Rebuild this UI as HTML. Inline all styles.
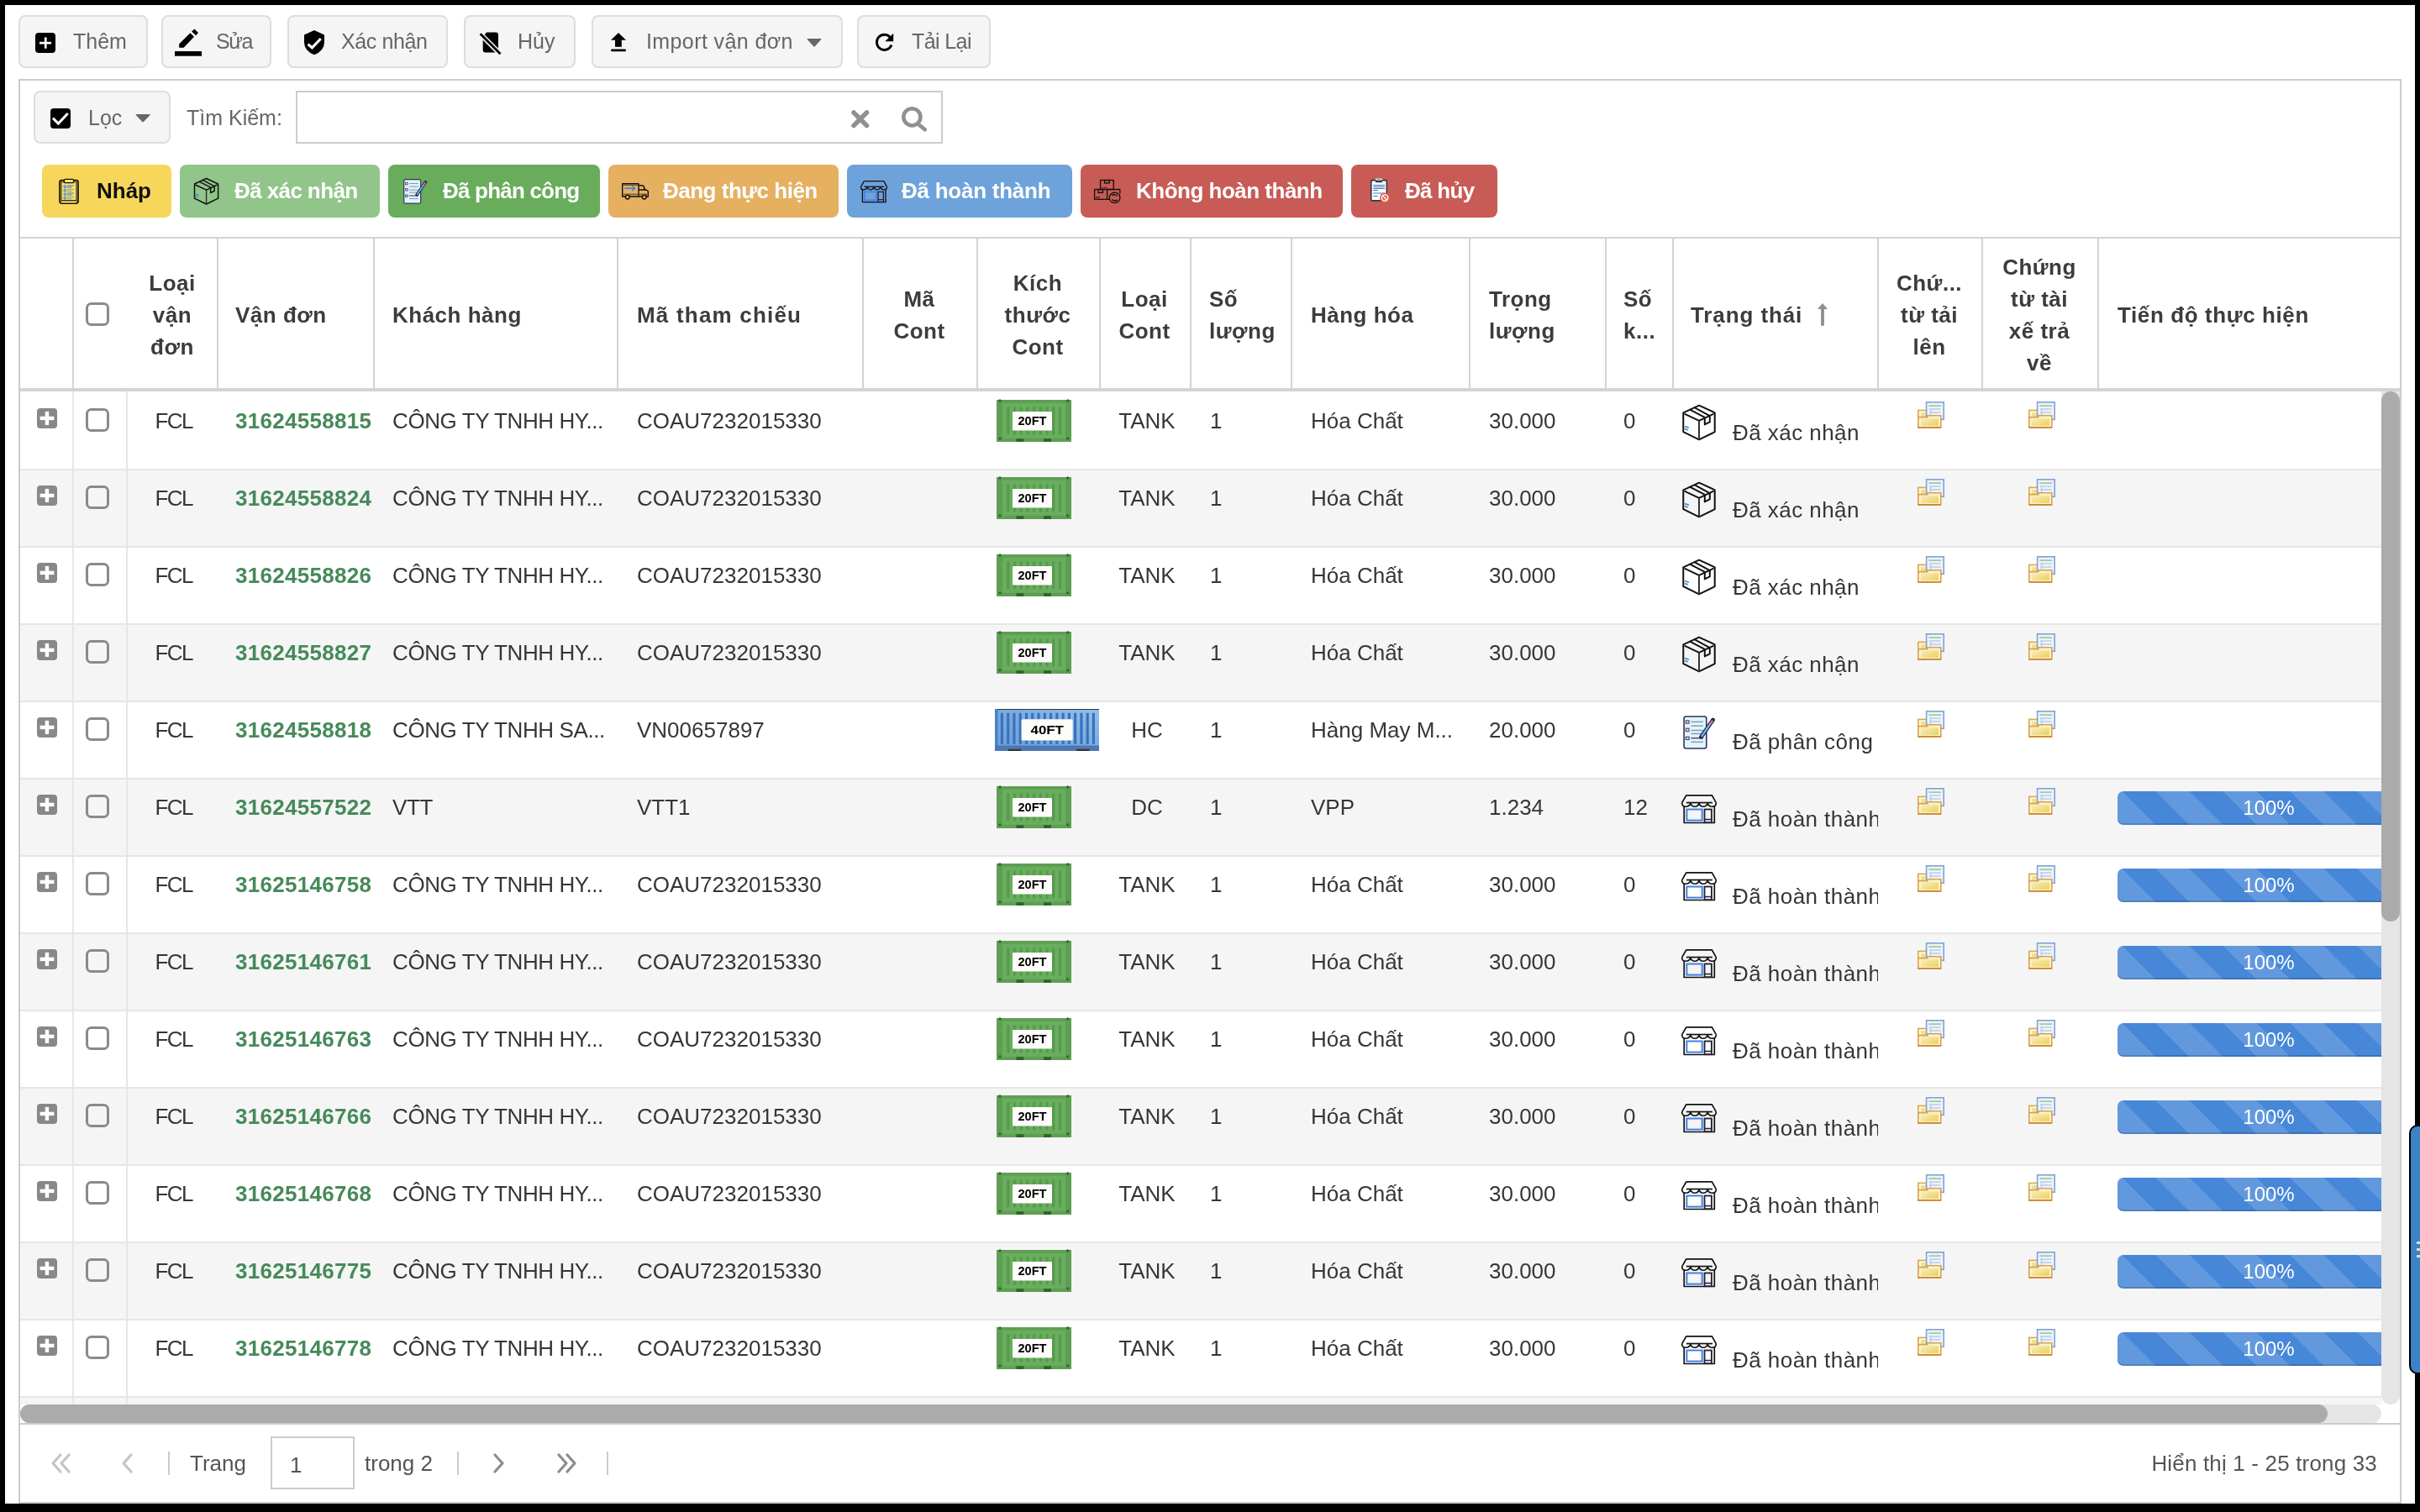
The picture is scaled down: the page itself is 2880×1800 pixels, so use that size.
<!DOCTYPE html><html><head><meta charset="utf-8"><style>
*{box-sizing:border-box;margin:0;padding:0}
html,body{width:2880px;height:1800px;overflow:hidden;background:#000;font-family:"Liberation Sans",sans-serif;color:#333}
#pg{position:absolute;left:6px;top:6px;width:2868px;height:1784px;background:#fff;overflow:hidden;will-change:transform}
.ab{position:absolute}
svg.ab{overflow:visible}
.btn{position:absolute;top:12px;height:63px;border:2px solid #ddd;background:#f5f5f5;border-radius:8px}
.bt{position:absolute;font-size:25px;color:#666;line-height:30px;white-space:nowrap}
.tag{position:absolute;top:190px;height:63px;border-radius:8px}
.tt{position:absolute;font-size:26px;font-weight:bold;color:#fff;line-height:30px;white-space:nowrap;top:16px}
.t{position:absolute;font-size:26px;line-height:30px;white-space:nowrap;color:#363636}
.hd{position:absolute;font-size:26px;font-weight:bold;line-height:38px;color:#3c3c3c;display:flex;align-items:center;top:280px;height:178px}
.vl{position:absolute;width:2px;background:#d4d4d4}
</style></head><body><div id="pg">
<div class="btn" style="left:16px;width:154px"></div>
<div class="bt" style="left:81px;top:28px;letter-spacing:0px">Thêm</div>
<div class="btn" style="left:186px;width:131px"></div>
<div class="bt" style="left:251px;top:28px;letter-spacing:-1.5px">Sửa</div>
<div class="btn" style="left:336px;width:191px"></div>
<div class="bt" style="left:400px;top:28px;letter-spacing:-0.4px">Xác nhận</div>
<div class="btn" style="left:546px;width:133px"></div>
<div class="bt" style="left:610px;top:28px;letter-spacing:0px">Hủy</div>
<div class="btn" style="left:698px;width:299px"></div>
<div class="bt" style="left:763px;top:28px;letter-spacing:0.4px">Import vận đơn</div>
<div class="btn" style="left:1014px;width:159px"></div>
<div class="bt" style="left:1079px;top:28px;letter-spacing:-0.6px">Tải Lại</div>
<svg class="ab" style="left:36px;top:32.5px;" width="24" height="24" viewBox="0 0 24 24"><rect width="24" height="24" rx="4" fill="#000"/><rect x="5" y="10.8" width="14" height="2.7" fill="#fff"/><rect x="10.9" y="5.5" width="2.7" height="13.2" fill="#fff"/></svg>
<svg class="ab" style="left:202px;top:28px;" width="32" height="33" viewBox="0 0 32 33"><rect x="0" y="27" width="32" height="5.7" fill="#000"/><polygon points="5.2,18.3 18.4,5.2 23,9.8 10.6,22.8 5.2,22.8" fill="#000"/><polygon points="20.1,3.4 23.4,0.5 28,5 25.1,8.2" fill="#000"/></svg>
<svg class="ab" style="left:356px;top:29.700000000000003px;" width="24" height="30" viewBox="0 0 24 30"><path d="M12,0 L24,5.4 L24,14 Q24,24.5 12,29.3 Q0,24.5 0,14 L0,5.4 Z" fill="#000"/><polyline points="4.5,16.6 9.4,20.8 19.8,10" fill="none" stroke="#fff" stroke-width="3.2"/></svg>
<svg class="ab" style="left:565px;top:32px;" width="26" height="28" viewBox="0 0 26 28"><path d="M8,0.6 L19,0.6 Q22,0.6 22,3.6 L22,21.6 Q22,24.6 19,24.6 L6.7,24.6 Q3.7,24.6 3.7,21.6 L3.7,5.8 Z" fill="#000"/><line x1="0.6" y1="2.3" x2="24.5" y2="26.3" stroke="#f5f5f5" stroke-width="6"/><line x1="0.6" y1="2.3" x2="24.5" y2="26.3" stroke="#000" stroke-width="2.8"/></svg>
<svg class="ab" style="left:721px;top:32.9px;" width="18" height="23" viewBox="0 0 18 23"><polygon points="9,0 18,8.8 0,8.8" fill="#000"/><rect x="5" y="8.5" width="7.8" height="8.3" fill="#000"/><rect x="0" y="19.6" width="18" height="2.6" rx="1.2" fill="#000"/></svg>
<svg class="ab" style="left:954px;top:40px;" width="18" height="10" viewBox="0 0 18 10"><path d="M1,0 L17,0 Q18,0 17.2,1 L9.8,9.2 Q9.0,10 8.2,9.2 L0.8,1 Q0,0 1,0 Z" fill="#666"/></svg>
<svg class="ab" style="left:1035px;top:34px;" width="23" height="23" viewBox="0 0 23 23"><path d="M18.2,4.2 A9.1,9.1 0 1 0 20.0,13.6" fill="none" stroke="#000" stroke-width="2.9"/><polygon points="12.3,9.2 22.2,9.2 22.2,-0.2" fill="#000"/></svg>
<div class="ab" style="left:16px;top:88px;width:2836px;height:1696px;border:2px solid #ccc"></div>
<div class="btn" style="left:34px;top:102px;width:163px"></div>
<svg class="ab" style="left:54px;top:122.6px;" width="24" height="24" viewBox="0 0 24 24"><rect width="24" height="24" rx="4" fill="#000"/><polyline points="3,11.6 9.4,18 20.7,5.9" fill="none" stroke="#fff" stroke-width="3"/></svg>
<svg class="ab" style="left:155px;top:130px;" width="18.3" height="9.7" viewBox="0 0 18.3 9.7"><path d="M1,0 L17.3,0 Q18.3,0 17.5,1 L9.950000000000001,8.899999999999999 Q9.15,9.7 8.35,8.899999999999999 L0.8,1 Q0,0 1,0 Z" fill="#666"/></svg>
<div class="bt" style="left:99px;top:119px">Lọc</div>
<div class="bt" style="left:216px;top:119px">Tìm Kiếm:</div>
<div class="ab" style="left:346px;top:102px;width:770px;height:63px;border:2px solid #ccc;background:#fff"></div>
<svg class="ab" style="left:1007px;top:124.5px;" width="22" height="22" viewBox="0 0 22 22"><line x1="3" y1="3" x2="18.5" y2="18.5" stroke="#909090" stroke-width="5.5" stroke-linecap="round"/><line x1="18.5" y1="3" x2="3" y2="18.5" stroke="#909090" stroke-width="5.5" stroke-linecap="round"/></svg>
<svg class="ab" style="left:1067px;top:121px;" width="31" height="30" viewBox="0 0 31 30"><circle cx="12.4" cy="12.3" r="10.1" fill="none" stroke="#909090" stroke-width="4.5"/><line x1="20" y1="21" x2="27.8" y2="27.3" stroke="#909090" stroke-width="4.6" stroke-linecap="round"/></svg>
<div class="tag" style="left:44px;width:154px;background:#f7d75b"><div class="tt" style="left:65px;color:#111;letter-spacing:0px">Nháp</div></div>
<div class="tag" style="left:208px;width:238px;background:#91c58a"><div class="tt" style="left:65px;color:#fff;letter-spacing:-0.6px">Đã xác nhận</div></div>
<div class="tag" style="left:456px;width:252px;background:#68ac5c"><div class="tt" style="left:65px;color:#fff;letter-spacing:-0.8px">Đã phân công</div></div>
<div class="tag" style="left:718px;width:274px;background:#e6b061"><div class="tt" style="left:65px;color:#fff;letter-spacing:-0.5px">Đang thực hiện</div></div>
<div class="tag" style="left:1002px;width:268px;background:#6ea2da"><div class="tt" style="left:65px;color:#fff;letter-spacing:-0.25px">Đã hoàn thành</div></div>
<div class="tag" style="left:1280px;width:312px;background:#c85b55"><div class="tt" style="left:66px;color:#fff;letter-spacing:-0.5px">Không hoàn thành</div></div>
<div class="tag" style="left:1602px;width:174px;background:#c85b55"><div class="tt" style="left:64px;color:#fff;letter-spacing:-0.7px">Đã hủy</div></div>
<svg class="ab" style="left:64px;top:206.3px;" width="24" height="31.7" viewBox="0 0 24 30.4"><rect x="0.8" y="1.8" width="22.4" height="27.8" rx="2.5" fill="#7a6a2e" stroke="#111" stroke-width="1.3"/><rect x="3.8" y="4.9" width="16.3" height="21.6" fill="#fde168"/><rect x="3.2" y="26.2" width="17.6" height="2.6" fill="#fde168"/><line x1="3.2" y1="26.1" x2="20.8" y2="26.1" stroke="#111" stroke-width="1.2"/><rect x="6.3" y="0.7" width="11.4" height="4.3" rx="1.6" fill="#fde168" stroke="#111" stroke-width="1.3"/><g fill="none" stroke="#3e7fe4" stroke-width="1.1"><circle cx="7.3" cy="9.4" r="1.3"/><circle cx="7.3" cy="13.9" r="1.3"/><circle cx="7.3" cy="18.4" r="1.3"/><circle cx="7.3" cy="22.9" r="1.3"/><line x1="9.8" y1="8.4" x2="17.8" y2="8.4"/><line x1="9.8" y1="10.4" x2="15.5" y2="10.4"/><line x1="9.8" y1="12.9" x2="17.8" y2="12.9" stroke="#90a0a0"/><line x1="9.8" y1="15" x2="15.5" y2="15" stroke="#90a0a0"/><line x1="9.8" y1="17.4" x2="17.8" y2="17.4"/><line x1="9.8" y1="19.4" x2="15.5" y2="19.4"/><line x1="9.8" y1="21.9" x2="17.8" y2="21.9" stroke="#90a0a0"/><line x1="9.8" y1="24" x2="15.5" y2="24" stroke="#90a0a0"/></g></svg>
<svg class="ab" style="left:225px;top:206.3px;" width="29.1" height="31.5" viewBox="0 0 29.1 31.5"><g fill="none" stroke="#111" stroke-width="1.5" stroke-linejoin="round"><polygon points="14.57,0.5 0.5,6.98 0.5,24.14 14.57,31 28.6,24.14 28.6,6.98"/><polyline points="1.5,8 14.57,14.1 27.6,8"/><line x1="14.57" y1="14.1" x2="14.57" y2="31" stroke="#333"/><line x1="6" y1="4.04" x2="19.66" y2="11.2"/><line x1="10.06" y1="2.18" x2="23.44" y2="9.44"/><polyline points="19.66,11.2 19.66,17.6 24.17,15.27 24.17,9.44"/></g><g stroke="#3d7fe0" stroke-width="1.2" stroke-linecap="round"><line x1="2.2" y1="19.3" x2="5" y2="20.3"/><line x1="2.2" y1="21.5" x2="4.2" y2="22.3"/></g></svg>
<svg class="ab" style="left:474px;top:207.3px;" width="27.5" height="30" viewBox="0 0 27.5 30"><rect x="0.7" y="0.7" width="20" height="28.5" rx="1.8" fill="#dff7fb" stroke="#3a3060" stroke-width="1.2"/><g stroke-width="1" fill="none"><rect x="2.4" y="4.3" width="2.8" height="2.6" stroke="#6b5f8a" fill="#f7c2cc"/><rect x="2.4" y="11.4" width="2.8" height="2.6" stroke="#6b5f8a" fill="#f7c2cc"/><rect x="2.4" y="19" width="2.8" height="2.3" stroke="#5a4f7a"/><g stroke="#8f96b4" stroke-width="1.1"><line x1="7" y1="5.5" x2="17.8" y2="5.5"/><line x1="7" y1="9.1" x2="17.8" y2="9.1"/><line x1="7" y1="13.1" x2="17.8" y2="13.1"/><line x1="7" y1="16.1" x2="17.8" y2="16.1"/><line x1="7" y1="20" x2="17.8" y2="20" stroke="#4a4370"/><line x1="7" y1="23.5" x2="17.8" y2="23.5"/></g></g><line x1="16" y1="19" x2="26.5" y2="3.8" stroke="#2c2550" stroke-width="3.6" stroke-linecap="round"/><line x1="16.3" y1="18.6" x2="24.5" y2="6.6" stroke="#6cc4f2" stroke-width="1.6"/><line x1="24.3" y1="7" x2="26.2" y2="4.3" stroke="#f06c8c" stroke-width="1.8"/></svg>
<svg class="ab" style="left:734.3px;top:212.2px;" width="32" height="19.5" viewBox="0 0 32 19.5"><g fill="none" stroke="#111" stroke-width="1.4" stroke-linejoin="round"><rect x="0.7" y="0.7" width="19.3" height="15.3"/><path d="M20,2.8 L24.5,2.8 Q25.8,2.8 26.2,4 L27,7.5 L30.2,8.6 Q31.3,9 31.3,10.3 L31.3,16 L20,16"/><path d="M20,8 L27,8 L26.5,4.5"/><circle cx="6.8" cy="16.6" r="2.4" fill="#e6b061"/><circle cx="26.7" cy="16.6" r="2.4" fill="#e6b061"/></g><g stroke="#5a4a2a" stroke-width="1.6" opacity=".8"><line x1="1.4" y1="2.3" x2="19.3" y2="2.3"/><line x1="1.4" y1="13.4" x2="19.3" y2="13.4"/><line x1="20.7" y1="13.4" x2="30" y2="13.4"/></g><g stroke="#3d7fe8" stroke-width="1.5" fill="none" stroke-linecap="round"><line x1="3.6" y1="6.2" x2="15.4" y2="6.2"/><polyline points="12.7,3.7 15.6,6.2 12.7,8.7"/></g></svg>
<svg class="ab" style="left:1018.3px;top:209.3px;" width="32" height="26" viewBox="0 0 32 26"><g fill="none" stroke="#111" stroke-width="1.3" stroke-linejoin="round"><path d="M4.4,0.6 L27.8,0.6 L31.6,7.6 M4.4,0.6 L0.4,7.6"/><line x1="4.4" y1="7.3" x2="28.2" y2="7.3"/><path d="M0.4,7.6 Q0.6,10.9 3.8,10.9 Q7.2,10.9 8.2,7.8 Q9.4,10.9 12.2,10.9 Q15,10.9 16,7.8 Q17,10.9 19.8,10.9 Q22.6,10.9 23.8,7.8 Q24.8,10.9 27.8,10.9 Q31.4,10.9 31.6,7.6"/><path d="M2.4,10.6 L2.4,25.6 L30,25.6 L30,10.6"/></g><rect x="4.8" y="13.4" width="14" height="10" fill="none" stroke="#3f7fe6" stroke-width="1.5"/><rect x="21" y="13.4" width="6.4" height="12" fill="none" stroke="#223" stroke-width="1.4"/><line x1="21" y1="22.6" x2="27.4" y2="22.6" stroke="#223" stroke-width="1.2"/></svg>
<svg class="ab" style="left:1296.4px;top:208.2px;" width="32" height="28.5" viewBox="0 0 32 28.5"><g fill="none" stroke="#111" stroke-width="1.3"><rect x="7.6" y="0.5" width="15.6" height="11"/><rect x="12.6" y="0.5" width="5.6" height="3.4"/><rect x="0.6" y="11.5" width="15" height="11.8"/><rect x="5" y="11.5" width="5.4" height="3.9"/><path d="M15.6,11.5 L30.8,11.5 L30.8,16.5 M15.6,23.3 L18.5,23.3"/><circle cx="24.6" cy="21.4" r="6.3" fill="#c85b55"/><path d="M21.5,19 A3.6,3.6 0 0 1 27.5,19.5 M27.7,23.7 A3.6,3.6 0 0 1 21.6,23.4" stroke-width="1.5"/></g><g fill="#111"><circle cx="10.4" cy="9.4" r=".7"/><circle cx="12.4" cy="9.4" r=".7"/><circle cx="14.4" cy="9.4" r=".7"/><rect x="2" y="20" width="5" height="1.6" opacity=".7"/></g></svg>
<svg class="ab" style="left:1625px;top:206px;" width="23.5" height="30" viewBox="0 0 23.5 30"><rect x="0.8" y="2.6" width="18.5" height="24.3" rx="1.4" fill="#fff" stroke="#313843" stroke-width="1.6"/><path d="M5.2,2 L14.8,2 L13.6,5.2 L6.4,5.2 Z" fill="#313843"/><ellipse cx="10" cy="1.6" rx="4.6" ry="1.4" fill="#cfd4da"/><circle cx="10" cy="1.6" r=".7" fill="#8a2020"/><g stroke="#3c72c2" stroke-width="1.2" stroke-linecap="round"><line x1="3.7" y1="8.5" x2="16.6" y2="8.5"/><line x1="3.7" y1="10.5" x2="16.6" y2="10.5"/><line x1="3.7" y1="12.5" x2="16.6" y2="12.5"/><line x1="3.7" y1="14.5" x2="8.3" y2="14.5"/><line x1="3.7" y1="18" x2="16.6" y2="18"/><line x1="3.7" y1="21.5" x2="8.3" y2="21.5"/></g><circle cx="17" cy="23.5" r="6" fill="#e2654c"/><circle cx="17" cy="23.5" r="3.7" fill="none" stroke="#fff" stroke-width="1.3"/><line x1="14.5" y1="21" x2="19.5" y2="26" stroke="#fff" stroke-width="1.3"/></svg>
<div class="ab" style="left:18px;top:276px;width:2832px;height:2px;background:#d4d4d4"></div>
<div class="ab" style="left:18px;top:456px;width:2832px;height:4px;background:#d4d4d4"></div>
<div class="vl" style="left:80px;top:278px;height:178px"></div>
<div class="vl" style="left:252px;top:278px;height:178px"></div>
<div class="vl" style="left:438px;top:278px;height:178px"></div>
<div class="vl" style="left:728px;top:278px;height:178px"></div>
<div class="vl" style="left:1020px;top:278px;height:178px"></div>
<div class="vl" style="left:1156px;top:278px;height:178px"></div>
<div class="vl" style="left:1302px;top:278px;height:178px"></div>
<div class="vl" style="left:1410px;top:278px;height:178px"></div>
<div class="vl" style="left:1530px;top:278px;height:178px"></div>
<div class="vl" style="left:1742px;top:278px;height:178px"></div>
<div class="vl" style="left:1904px;top:278px;height:178px"></div>
<div class="vl" style="left:1984px;top:278px;height:178px"></div>
<div class="vl" style="left:2228px;top:278px;height:178px"></div>
<div class="vl" style="left:2352px;top:278px;height:178px"></div>
<div class="vl" style="left:2490px;top:278px;height:178px"></div>
<svg class="ab" style="left:95.8px;top:354.2px;" width="28" height="28" viewBox="0 0 28 28"><rect x="1.5" y="1.5" width="25" height="25" rx="5" fill="none" stroke="#8a8a8a" stroke-width="3"/></svg>
<div class="hd" style="left:99px;width:200px;justify-content:center;text-align:center;letter-spacing:.5px">Loại<br>vận<br>đơn</div>
<div class="hd" style="left:274px;letter-spacing:0.5px">Vận đơn</div>
<div class="hd" style="left:461px;letter-spacing:0.5px">Khách hàng</div>
<div class="hd" style="left:752px;letter-spacing:1.2px">Mã tham chiếu</div>
<div class="hd" style="left:988.0px;width:200px;justify-content:center;text-align:center;letter-spacing:.5px">Mã<br>Cont</div>
<div class="hd" style="left:1129.0px;width:200px;justify-content:center;text-align:center;letter-spacing:.5px">Kích<br>thước<br>Cont</div>
<div class="hd" style="left:1256.0px;width:200px;justify-content:center;text-align:center;letter-spacing:.5px">Loại<br>Cont</div>
<div class="hd" style="left:1433px;letter-spacing:0.5px">Số<br>lượng</div>
<div class="hd" style="left:1554px;letter-spacing:0.5px">Hàng hóa</div>
<div class="hd" style="left:1766px;letter-spacing:0.5px">Trọng<br>lượng</div>
<div class="hd" style="left:1926px;letter-spacing:0.5px">Số<br>k...</div>
<div class="hd" style="left:2006px;letter-spacing:0.9px">Trạng thái</div>
<div class="hd" style="left:2190.0px;width:200px;justify-content:center;text-align:center;letter-spacing:.5px">Chứ...<br>từ tải<br>lên</div>
<div class="hd" style="left:2321.0px;width:200px;justify-content:center;text-align:center;letter-spacing:.5px">Chứng<br>từ tài<br>xế trả<br>về</div>
<div class="hd" style="left:2514px;letter-spacing:0.6px">Tiến độ thực hiện</div>
<svg class="ab" style="left:2156.5px;top:355px;" width="13" height="27" viewBox="0 0 13 27"><polygon points="6,0 12,7 0,7" fill="#8f8f8f"/><rect x="4.1" y="6" width="3.8" height="20.8" fill="#8f8f8f"/></svg>
<div class="ab" style="left:18px;top:460px;width:2810px;height:1206px;overflow:hidden">
<div class="ab" style="left:0;top:0px;width:2810px;height:92px;background:#fff"></div>
<div class="ab" style="left:0;top:92px;width:2810px;height:2px;background:#e6e6e6;z-index:1"></div>
<div class="t" style="left:256px;top:20px;color:#468a5a;font-weight:bold;letter-spacing:.3px">31624558815</div>
<div class="t" style="left:443px;top:20px;letter-spacing:-.4px">CÔNG TY TNHH HY...</div>
<div class="t" style="left:734px;top:20px;">COAU7232015330</div>
<div class="t" style="left:1416px;top:20px;">1</div>
<div class="t" style="left:1536px;top:20px;">Hóa Chất</div>
<div class="t" style="left:1748px;top:20px;">30.000</div>
<div class="t" style="left:1908px;top:20px;">0</div>
<div class="t" style="left:1276px;width:130px;text-align:center;top:20px">TANK</div>
<div class="t" style="left:156px;width:52px;text-align:center;top:20px;letter-spacing:-1.5px;text-indent:1.5px">FCL</div>
<div class="t" style="left:2038px;width:173px;overflow:hidden;top:34px;letter-spacing:.45px">Đã xác nhận</div>
<div class="ab" style="left:0;top:92px;width:2810px;height:92px;background:#f5f5f5"></div>
<div class="ab" style="left:0;top:184px;width:2810px;height:2px;background:#e6e6e6;z-index:1"></div>
<div class="t" style="left:256px;top:112px;color:#468a5a;font-weight:bold;letter-spacing:.3px">31624558824</div>
<div class="t" style="left:443px;top:112px;letter-spacing:-.4px">CÔNG TY TNHH HY...</div>
<div class="t" style="left:734px;top:112px;">COAU7232015330</div>
<div class="t" style="left:1416px;top:112px;">1</div>
<div class="t" style="left:1536px;top:112px;">Hóa Chất</div>
<div class="t" style="left:1748px;top:112px;">30.000</div>
<div class="t" style="left:1908px;top:112px;">0</div>
<div class="t" style="left:1276px;width:130px;text-align:center;top:112px">TANK</div>
<div class="t" style="left:156px;width:52px;text-align:center;top:112px;letter-spacing:-1.5px;text-indent:1.5px">FCL</div>
<div class="t" style="left:2038px;width:173px;overflow:hidden;top:126px;letter-spacing:.45px">Đã xác nhận</div>
<div class="ab" style="left:0;top:184px;width:2810px;height:92px;background:#fff"></div>
<div class="ab" style="left:0;top:276px;width:2810px;height:2px;background:#e6e6e6;z-index:1"></div>
<div class="t" style="left:256px;top:204px;color:#468a5a;font-weight:bold;letter-spacing:.3px">31624558826</div>
<div class="t" style="left:443px;top:204px;letter-spacing:-.4px">CÔNG TY TNHH HY...</div>
<div class="t" style="left:734px;top:204px;">COAU7232015330</div>
<div class="t" style="left:1416px;top:204px;">1</div>
<div class="t" style="left:1536px;top:204px;">Hóa Chất</div>
<div class="t" style="left:1748px;top:204px;">30.000</div>
<div class="t" style="left:1908px;top:204px;">0</div>
<div class="t" style="left:1276px;width:130px;text-align:center;top:204px">TANK</div>
<div class="t" style="left:156px;width:52px;text-align:center;top:204px;letter-spacing:-1.5px;text-indent:1.5px">FCL</div>
<div class="t" style="left:2038px;width:173px;overflow:hidden;top:218px;letter-spacing:.45px">Đã xác nhận</div>
<div class="ab" style="left:0;top:276px;width:2810px;height:92px;background:#f5f5f5"></div>
<div class="ab" style="left:0;top:368px;width:2810px;height:2px;background:#e6e6e6;z-index:1"></div>
<div class="t" style="left:256px;top:296px;color:#468a5a;font-weight:bold;letter-spacing:.3px">31624558827</div>
<div class="t" style="left:443px;top:296px;letter-spacing:-.4px">CÔNG TY TNHH HY...</div>
<div class="t" style="left:734px;top:296px;">COAU7232015330</div>
<div class="t" style="left:1416px;top:296px;">1</div>
<div class="t" style="left:1536px;top:296px;">Hóa Chất</div>
<div class="t" style="left:1748px;top:296px;">30.000</div>
<div class="t" style="left:1908px;top:296px;">0</div>
<div class="t" style="left:1276px;width:130px;text-align:center;top:296px">TANK</div>
<div class="t" style="left:156px;width:52px;text-align:center;top:296px;letter-spacing:-1.5px;text-indent:1.5px">FCL</div>
<div class="t" style="left:2038px;width:173px;overflow:hidden;top:310px;letter-spacing:.45px">Đã xác nhận</div>
<div class="ab" style="left:0;top:368px;width:2810px;height:92px;background:#fff"></div>
<div class="ab" style="left:0;top:460px;width:2810px;height:2px;background:#e6e6e6;z-index:1"></div>
<div class="t" style="left:256px;top:388px;color:#468a5a;font-weight:bold;letter-spacing:.3px">31624558818</div>
<div class="t" style="left:443px;top:388px;letter-spacing:-.4px">CÔNG TY TNHH SA...</div>
<div class="t" style="left:734px;top:388px;">VN00657897</div>
<div class="t" style="left:1416px;top:388px;">1</div>
<div class="t" style="left:1536px;top:388px;">Hàng May M...</div>
<div class="t" style="left:1748px;top:388px;">20.000</div>
<div class="t" style="left:1908px;top:388px;">0</div>
<div class="t" style="left:1276px;width:130px;text-align:center;top:388px">HC</div>
<div class="t" style="left:156px;width:52px;text-align:center;top:388px;letter-spacing:-1.5px;text-indent:1.5px">FCL</div>
<div class="t" style="left:2038px;width:173px;overflow:hidden;top:402px;letter-spacing:.45px">Đã phân công</div>
<div class="ab" style="left:0;top:460px;width:2810px;height:92px;background:#f5f5f5"></div>
<div class="ab" style="left:0;top:552px;width:2810px;height:2px;background:#e6e6e6;z-index:1"></div>
<div class="t" style="left:256px;top:480px;color:#468a5a;font-weight:bold;letter-spacing:.3px">31624557522</div>
<div class="t" style="left:443px;top:480px;letter-spacing:-.4px">VTT</div>
<div class="t" style="left:734px;top:480px;">VTT1</div>
<div class="t" style="left:1416px;top:480px;">1</div>
<div class="t" style="left:1536px;top:480px;">VPP</div>
<div class="t" style="left:1748px;top:480px;">1.234</div>
<div class="t" style="left:1908px;top:480px;">12</div>
<div class="t" style="left:1276px;width:130px;text-align:center;top:480px">DC</div>
<div class="t" style="left:156px;width:52px;text-align:center;top:480px;letter-spacing:-1.5px;text-indent:1.5px">FCL</div>
<div class="t" style="left:2038px;width:173px;overflow:hidden;top:494px;letter-spacing:.45px">Đã hoàn thành</div>
<div class="ab" style="left:2496px;top:476px;width:360px;height:40px;border-radius:7px;background-color:#4787d8;background-image:linear-gradient(45deg,rgba(255,255,255,.15) 25%,transparent 25%,transparent 50%,rgba(255,255,255,.15) 50%,rgba(255,255,255,.15) 75%,transparent 75%,transparent);background-size:80px 80px;background-position:-34px 0;box-shadow:inset 0 -2px 0 rgba(0,0,0,.15)"><div class="t" style="left:0;width:360px;text-align:center;top:5px;color:#fff;font-size:24px">100%</div></div>
<div class="ab" style="left:0;top:552px;width:2810px;height:92px;background:#fff"></div>
<div class="ab" style="left:0;top:644px;width:2810px;height:2px;background:#e6e6e6;z-index:1"></div>
<div class="t" style="left:256px;top:572px;color:#468a5a;font-weight:bold;letter-spacing:.3px">31625146758</div>
<div class="t" style="left:443px;top:572px;letter-spacing:-.4px">CÔNG TY TNHH HY...</div>
<div class="t" style="left:734px;top:572px;">COAU7232015330</div>
<div class="t" style="left:1416px;top:572px;">1</div>
<div class="t" style="left:1536px;top:572px;">Hóa Chất</div>
<div class="t" style="left:1748px;top:572px;">30.000</div>
<div class="t" style="left:1908px;top:572px;">0</div>
<div class="t" style="left:1276px;width:130px;text-align:center;top:572px">TANK</div>
<div class="t" style="left:156px;width:52px;text-align:center;top:572px;letter-spacing:-1.5px;text-indent:1.5px">FCL</div>
<div class="t" style="left:2038px;width:173px;overflow:hidden;top:586px;letter-spacing:.45px">Đã hoàn thành</div>
<div class="ab" style="left:2496px;top:568px;width:360px;height:40px;border-radius:7px;background-color:#4787d8;background-image:linear-gradient(45deg,rgba(255,255,255,.15) 25%,transparent 25%,transparent 50%,rgba(255,255,255,.15) 50%,rgba(255,255,255,.15) 75%,transparent 75%,transparent);background-size:80px 80px;background-position:-34px 0;box-shadow:inset 0 -2px 0 rgba(0,0,0,.15)"><div class="t" style="left:0;width:360px;text-align:center;top:5px;color:#fff;font-size:24px">100%</div></div>
<div class="ab" style="left:0;top:644px;width:2810px;height:92px;background:#f5f5f5"></div>
<div class="ab" style="left:0;top:736px;width:2810px;height:2px;background:#e6e6e6;z-index:1"></div>
<div class="t" style="left:256px;top:664px;color:#468a5a;font-weight:bold;letter-spacing:.3px">31625146761</div>
<div class="t" style="left:443px;top:664px;letter-spacing:-.4px">CÔNG TY TNHH HY...</div>
<div class="t" style="left:734px;top:664px;">COAU7232015330</div>
<div class="t" style="left:1416px;top:664px;">1</div>
<div class="t" style="left:1536px;top:664px;">Hóa Chất</div>
<div class="t" style="left:1748px;top:664px;">30.000</div>
<div class="t" style="left:1908px;top:664px;">0</div>
<div class="t" style="left:1276px;width:130px;text-align:center;top:664px">TANK</div>
<div class="t" style="left:156px;width:52px;text-align:center;top:664px;letter-spacing:-1.5px;text-indent:1.5px">FCL</div>
<div class="t" style="left:2038px;width:173px;overflow:hidden;top:678px;letter-spacing:.45px">Đã hoàn thành</div>
<div class="ab" style="left:2496px;top:660px;width:360px;height:40px;border-radius:7px;background-color:#4787d8;background-image:linear-gradient(45deg,rgba(255,255,255,.15) 25%,transparent 25%,transparent 50%,rgba(255,255,255,.15) 50%,rgba(255,255,255,.15) 75%,transparent 75%,transparent);background-size:80px 80px;background-position:-34px 0;box-shadow:inset 0 -2px 0 rgba(0,0,0,.15)"><div class="t" style="left:0;width:360px;text-align:center;top:5px;color:#fff;font-size:24px">100%</div></div>
<div class="ab" style="left:0;top:736px;width:2810px;height:92px;background:#fff"></div>
<div class="ab" style="left:0;top:828px;width:2810px;height:2px;background:#e6e6e6;z-index:1"></div>
<div class="t" style="left:256px;top:756px;color:#468a5a;font-weight:bold;letter-spacing:.3px">31625146763</div>
<div class="t" style="left:443px;top:756px;letter-spacing:-.4px">CÔNG TY TNHH HY...</div>
<div class="t" style="left:734px;top:756px;">COAU7232015330</div>
<div class="t" style="left:1416px;top:756px;">1</div>
<div class="t" style="left:1536px;top:756px;">Hóa Chất</div>
<div class="t" style="left:1748px;top:756px;">30.000</div>
<div class="t" style="left:1908px;top:756px;">0</div>
<div class="t" style="left:1276px;width:130px;text-align:center;top:756px">TANK</div>
<div class="t" style="left:156px;width:52px;text-align:center;top:756px;letter-spacing:-1.5px;text-indent:1.5px">FCL</div>
<div class="t" style="left:2038px;width:173px;overflow:hidden;top:770px;letter-spacing:.45px">Đã hoàn thành</div>
<div class="ab" style="left:2496px;top:752px;width:360px;height:40px;border-radius:7px;background-color:#4787d8;background-image:linear-gradient(45deg,rgba(255,255,255,.15) 25%,transparent 25%,transparent 50%,rgba(255,255,255,.15) 50%,rgba(255,255,255,.15) 75%,transparent 75%,transparent);background-size:80px 80px;background-position:-34px 0;box-shadow:inset 0 -2px 0 rgba(0,0,0,.15)"><div class="t" style="left:0;width:360px;text-align:center;top:5px;color:#fff;font-size:24px">100%</div></div>
<div class="ab" style="left:0;top:828px;width:2810px;height:92px;background:#f5f5f5"></div>
<div class="ab" style="left:0;top:920px;width:2810px;height:2px;background:#e6e6e6;z-index:1"></div>
<div class="t" style="left:256px;top:848px;color:#468a5a;font-weight:bold;letter-spacing:.3px">31625146766</div>
<div class="t" style="left:443px;top:848px;letter-spacing:-.4px">CÔNG TY TNHH HY...</div>
<div class="t" style="left:734px;top:848px;">COAU7232015330</div>
<div class="t" style="left:1416px;top:848px;">1</div>
<div class="t" style="left:1536px;top:848px;">Hóa Chất</div>
<div class="t" style="left:1748px;top:848px;">30.000</div>
<div class="t" style="left:1908px;top:848px;">0</div>
<div class="t" style="left:1276px;width:130px;text-align:center;top:848px">TANK</div>
<div class="t" style="left:156px;width:52px;text-align:center;top:848px;letter-spacing:-1.5px;text-indent:1.5px">FCL</div>
<div class="t" style="left:2038px;width:173px;overflow:hidden;top:862px;letter-spacing:.45px">Đã hoàn thành</div>
<div class="ab" style="left:2496px;top:844px;width:360px;height:40px;border-radius:7px;background-color:#4787d8;background-image:linear-gradient(45deg,rgba(255,255,255,.15) 25%,transparent 25%,transparent 50%,rgba(255,255,255,.15) 50%,rgba(255,255,255,.15) 75%,transparent 75%,transparent);background-size:80px 80px;background-position:-34px 0;box-shadow:inset 0 -2px 0 rgba(0,0,0,.15)"><div class="t" style="left:0;width:360px;text-align:center;top:5px;color:#fff;font-size:24px">100%</div></div>
<div class="ab" style="left:0;top:920px;width:2810px;height:92px;background:#fff"></div>
<div class="ab" style="left:0;top:1012px;width:2810px;height:2px;background:#e6e6e6;z-index:1"></div>
<div class="t" style="left:256px;top:940px;color:#468a5a;font-weight:bold;letter-spacing:.3px">31625146768</div>
<div class="t" style="left:443px;top:940px;letter-spacing:-.4px">CÔNG TY TNHH HY...</div>
<div class="t" style="left:734px;top:940px;">COAU7232015330</div>
<div class="t" style="left:1416px;top:940px;">1</div>
<div class="t" style="left:1536px;top:940px;">Hóa Chất</div>
<div class="t" style="left:1748px;top:940px;">30.000</div>
<div class="t" style="left:1908px;top:940px;">0</div>
<div class="t" style="left:1276px;width:130px;text-align:center;top:940px">TANK</div>
<div class="t" style="left:156px;width:52px;text-align:center;top:940px;letter-spacing:-1.5px;text-indent:1.5px">FCL</div>
<div class="t" style="left:2038px;width:173px;overflow:hidden;top:954px;letter-spacing:.45px">Đã hoàn thành</div>
<div class="ab" style="left:2496px;top:936px;width:360px;height:40px;border-radius:7px;background-color:#4787d8;background-image:linear-gradient(45deg,rgba(255,255,255,.15) 25%,transparent 25%,transparent 50%,rgba(255,255,255,.15) 50%,rgba(255,255,255,.15) 75%,transparent 75%,transparent);background-size:80px 80px;background-position:-34px 0;box-shadow:inset 0 -2px 0 rgba(0,0,0,.15)"><div class="t" style="left:0;width:360px;text-align:center;top:5px;color:#fff;font-size:24px">100%</div></div>
<div class="ab" style="left:0;top:1012px;width:2810px;height:92px;background:#f5f5f5"></div>
<div class="ab" style="left:0;top:1104px;width:2810px;height:2px;background:#e6e6e6;z-index:1"></div>
<div class="t" style="left:256px;top:1032px;color:#468a5a;font-weight:bold;letter-spacing:.3px">31625146775</div>
<div class="t" style="left:443px;top:1032px;letter-spacing:-.4px">CÔNG TY TNHH HY...</div>
<div class="t" style="left:734px;top:1032px;">COAU7232015330</div>
<div class="t" style="left:1416px;top:1032px;">1</div>
<div class="t" style="left:1536px;top:1032px;">Hóa Chất</div>
<div class="t" style="left:1748px;top:1032px;">30.000</div>
<div class="t" style="left:1908px;top:1032px;">0</div>
<div class="t" style="left:1276px;width:130px;text-align:center;top:1032px">TANK</div>
<div class="t" style="left:156px;width:52px;text-align:center;top:1032px;letter-spacing:-1.5px;text-indent:1.5px">FCL</div>
<div class="t" style="left:2038px;width:173px;overflow:hidden;top:1046px;letter-spacing:.45px">Đã hoàn thành</div>
<div class="ab" style="left:2496px;top:1028px;width:360px;height:40px;border-radius:7px;background-color:#4787d8;background-image:linear-gradient(45deg,rgba(255,255,255,.15) 25%,transparent 25%,transparent 50%,rgba(255,255,255,.15) 50%,rgba(255,255,255,.15) 75%,transparent 75%,transparent);background-size:80px 80px;background-position:-34px 0;box-shadow:inset 0 -2px 0 rgba(0,0,0,.15)"><div class="t" style="left:0;width:360px;text-align:center;top:5px;color:#fff;font-size:24px">100%</div></div>
<div class="ab" style="left:0;top:1104px;width:2810px;height:92px;background:#fff"></div>
<div class="ab" style="left:0;top:1196px;width:2810px;height:2px;background:#e6e6e6;z-index:1"></div>
<div class="t" style="left:256px;top:1124px;color:#468a5a;font-weight:bold;letter-spacing:.3px">31625146778</div>
<div class="t" style="left:443px;top:1124px;letter-spacing:-.4px">CÔNG TY TNHH HY...</div>
<div class="t" style="left:734px;top:1124px;">COAU7232015330</div>
<div class="t" style="left:1416px;top:1124px;">1</div>
<div class="t" style="left:1536px;top:1124px;">Hóa Chất</div>
<div class="t" style="left:1748px;top:1124px;">30.000</div>
<div class="t" style="left:1908px;top:1124px;">0</div>
<div class="t" style="left:1276px;width:130px;text-align:center;top:1124px">TANK</div>
<div class="t" style="left:156px;width:52px;text-align:center;top:1124px;letter-spacing:-1.5px;text-indent:1.5px">FCL</div>
<div class="t" style="left:2038px;width:173px;overflow:hidden;top:1138px;letter-spacing:.45px">Đã hoàn thành</div>
<div class="ab" style="left:2496px;top:1120px;width:360px;height:40px;border-radius:7px;background-color:#4787d8;background-image:linear-gradient(45deg,rgba(255,255,255,.15) 25%,transparent 25%,transparent 50%,rgba(255,255,255,.15) 50%,rgba(255,255,255,.15) 75%,transparent 75%,transparent);background-size:80px 80px;background-position:-34px 0;box-shadow:inset 0 -2px 0 rgba(0,0,0,.15)"><div class="t" style="left:0;width:360px;text-align:center;top:5px;color:#fff;font-size:24px">100%</div></div>
<div class="ab" style="left:0;top:1196px;width:2810px;height:92px;background:#f5f5f5"></div>
<div class="ab" style="left:0;top:1288px;width:2810px;height:2px;background:#e6e6e6;z-index:1"></div>
</div>
<div class="vl" style="left:80px;top:460px;height:1206px;background:#e6e6e6"></div>
<div class="vl" style="left:144px;top:460px;height:1206px;background:#e6e6e6"></div>
<svg class="ab" style="left:38px;top:480.3px;" width="24" height="24" viewBox="0 0 24 24"><rect width="24" height="24" rx="4" fill="#888"/><rect x="3.6" y="9.7" width="16.8" height="4.4" fill="#fff"/><rect x="9.75" y="3.9" width="4.4" height="16" fill="#fff"/></svg>
<svg class="ab" style="left:95.8px;top:479.9px;" width="28" height="28" viewBox="0 0 28 28"><rect x="1.5" y="1.5" width="25" height="25" rx="5" fill="none" stroke="#8a8a8a" stroke-width="3"/></svg>
<svg class="ab" style="left:1179.5px;top:470px;" width="89" height="50" viewBox="0 0 89 50"><rect x="0" y="0" width="89" height="50" fill="#5e9f53"/><rect x="7" y="3.8" width="75" height="42" fill="#69ae5e"/><rect x="12.2" y="8" width="3.2" height="33.6" rx="1.6" fill="#579a4c"/><rect x="19.9" y="8" width="3.2" height="33.6" rx="1.6" fill="#579a4c"/><rect x="27.6" y="8" width="3.2" height="33.6" rx="1.6" fill="#579a4c"/><rect x="35.3" y="8" width="3.2" height="33.6" rx="1.6" fill="#579a4c"/><rect x="43.0" y="8" width="3.2" height="33.6" rx="1.6" fill="#579a4c"/><rect x="50.7" y="8" width="3.2" height="33.6" rx="1.6" fill="#579a4c"/><rect x="58.4" y="8" width="3.2" height="33.6" rx="1.6" fill="#579a4c"/><rect x="66.1" y="8" width="3.2" height="33.6" rx="1.6" fill="#579a4c"/><rect x="73.8" y="8" width="3.2" height="33.6" rx="1.6" fill="#579a4c"/><rect x="19" y="14" width="47" height="22.5" rx="1" fill="#fdfcfa"/><text x="42.5" y="30.2" font-family="Liberation Sans" font-weight="bold" font-size="14" text-anchor="middle" fill="#000" textLength="34" lengthAdjust="spacingAndGlyphs">20FT</text><rect x="23.4" y="46.2" width="9" height="3.8" fill="#2d652a"/><rect x="56" y="46.2" width="9" height="3.8" fill="#2d652a"/><g fill="#2f6a2c"><circle cx="4" cy="46" r="1.7"/><circle cx="84.7" cy="46" r="1.7"/><circle cx="4" cy="1" r="1.7"/><circle cx="84.7" cy="1" r="1.7"/></g></svg>
<svg class="ab" style="left:1996px;top:476px;" width="40" height="42" viewBox="0 0 29.1 31.5"><g fill="none" stroke="#111" stroke-width="1.5" stroke-linejoin="round"><polygon points="14.57,0.5 0.5,6.98 0.5,24.14 14.57,31 28.6,24.14 28.6,6.98"/><polyline points="1.5,8 14.57,14.1 27.6,8"/><line x1="14.57" y1="14.1" x2="14.57" y2="31" stroke="#333"/><line x1="6" y1="4.04" x2="19.66" y2="11.2"/><line x1="10.06" y1="2.18" x2="23.44" y2="9.44"/><polyline points="19.66,11.2 19.66,17.6 24.17,15.27 24.17,9.44"/></g><g stroke="#3d7fe0" stroke-width="1.2" stroke-linecap="round"><line x1="2.2" y1="19.3" x2="5" y2="20.3"/><line x1="2.2" y1="21.5" x2="4.2" y2="22.3"/></g></svg>
<svg class="ab" style="left:2276px;top:472px;" width="32" height="32" viewBox="0 0 32 32"><defs><linearGradient id="fg" x1="0" y1="0" x2="1" y2="1"><stop offset="0" stop-color="#f8efc0"/><stop offset="1" stop-color="#ebd058"/></linearGradient></defs><rect x="0.8" y="10.4" width="26" height="20.6" fill="#fdf6dc" stroke="#d9a84e" stroke-width="1.6"/><rect x="4" y="13" width="8" height="5.6" fill="#f3df90"/><rect x="10.6" y="0.8" width="20.6" height="20.5" fill="#eef3fb" stroke="#7fa2d8" stroke-width="1.6"/><line x1="14" y1="5.1" x2="27.5" y2="5.1" stroke="#9fcc98" stroke-width="1.8" stroke-linecap="round"/><g stroke="#b9cdea" stroke-width="1.5"><line x1="14" y1="9" x2="27.5" y2="9"/><line x1="14" y1="13" x2="27.5" y2="13"/><line x1="15.6" y1="9" x2="15.6" y2="17"/></g><path d="M0.8,18.6 L4,18.6 L11.8,18.6 L11.8,16.8 L27.8,16.8 L27.8,31 L0.8,31 Z" fill="#fbf1cc" stroke="#d9a24e" stroke-width="1.6"/><rect x="4" y="20.2" width="21" height="8.6" fill="url(#fg)"/><line x1="0.8" y1="30.8" x2="27.8" y2="30.8" stroke="#cf8638" stroke-width="1.6"/></svg>
<svg class="ab" style="left:2408px;top:472px;" width="32" height="32" viewBox="0 0 32 32"><defs><linearGradient id="fg" x1="0" y1="0" x2="1" y2="1"><stop offset="0" stop-color="#f8efc0"/><stop offset="1" stop-color="#ebd058"/></linearGradient></defs><rect x="0.8" y="10.4" width="26" height="20.6" fill="#fdf6dc" stroke="#d9a84e" stroke-width="1.6"/><rect x="4" y="13" width="8" height="5.6" fill="#f3df90"/><rect x="10.6" y="0.8" width="20.6" height="20.5" fill="#eef3fb" stroke="#7fa2d8" stroke-width="1.6"/><line x1="14" y1="5.1" x2="27.5" y2="5.1" stroke="#9fcc98" stroke-width="1.8" stroke-linecap="round"/><g stroke="#b9cdea" stroke-width="1.5"><line x1="14" y1="9" x2="27.5" y2="9"/><line x1="14" y1="13" x2="27.5" y2="13"/><line x1="15.6" y1="9" x2="15.6" y2="17"/></g><path d="M0.8,18.6 L4,18.6 L11.8,18.6 L11.8,16.8 L27.8,16.8 L27.8,31 L0.8,31 Z" fill="#fbf1cc" stroke="#d9a24e" stroke-width="1.6"/><rect x="4" y="20.2" width="21" height="8.6" fill="url(#fg)"/><line x1="0.8" y1="30.8" x2="27.8" y2="30.8" stroke="#cf8638" stroke-width="1.6"/></svg>
<svg class="ab" style="left:38px;top:572.3px;" width="24" height="24" viewBox="0 0 24 24"><rect width="24" height="24" rx="4" fill="#888"/><rect x="3.6" y="9.7" width="16.8" height="4.4" fill="#fff"/><rect x="9.75" y="3.9" width="4.4" height="16" fill="#fff"/></svg>
<svg class="ab" style="left:95.8px;top:571.9px;" width="28" height="28" viewBox="0 0 28 28"><rect x="1.5" y="1.5" width="25" height="25" rx="5" fill="none" stroke="#8a8a8a" stroke-width="3"/></svg>
<svg class="ab" style="left:1179.5px;top:562px;" width="89" height="50" viewBox="0 0 89 50"><rect x="0" y="0" width="89" height="50" fill="#5e9f53"/><rect x="7" y="3.8" width="75" height="42" fill="#69ae5e"/><rect x="12.2" y="8" width="3.2" height="33.6" rx="1.6" fill="#579a4c"/><rect x="19.9" y="8" width="3.2" height="33.6" rx="1.6" fill="#579a4c"/><rect x="27.6" y="8" width="3.2" height="33.6" rx="1.6" fill="#579a4c"/><rect x="35.3" y="8" width="3.2" height="33.6" rx="1.6" fill="#579a4c"/><rect x="43.0" y="8" width="3.2" height="33.6" rx="1.6" fill="#579a4c"/><rect x="50.7" y="8" width="3.2" height="33.6" rx="1.6" fill="#579a4c"/><rect x="58.4" y="8" width="3.2" height="33.6" rx="1.6" fill="#579a4c"/><rect x="66.1" y="8" width="3.2" height="33.6" rx="1.6" fill="#579a4c"/><rect x="73.8" y="8" width="3.2" height="33.6" rx="1.6" fill="#579a4c"/><rect x="19" y="14" width="47" height="22.5" rx="1" fill="#fdfcfa"/><text x="42.5" y="30.2" font-family="Liberation Sans" font-weight="bold" font-size="14" text-anchor="middle" fill="#000" textLength="34" lengthAdjust="spacingAndGlyphs">20FT</text><rect x="23.4" y="46.2" width="9" height="3.8" fill="#2d652a"/><rect x="56" y="46.2" width="9" height="3.8" fill="#2d652a"/><g fill="#2f6a2c"><circle cx="4" cy="46" r="1.7"/><circle cx="84.7" cy="46" r="1.7"/><circle cx="4" cy="1" r="1.7"/><circle cx="84.7" cy="1" r="1.7"/></g></svg>
<svg class="ab" style="left:1996px;top:568px;" width="40" height="42" viewBox="0 0 29.1 31.5"><g fill="none" stroke="#111" stroke-width="1.5" stroke-linejoin="round"><polygon points="14.57,0.5 0.5,6.98 0.5,24.14 14.57,31 28.6,24.14 28.6,6.98"/><polyline points="1.5,8 14.57,14.1 27.6,8"/><line x1="14.57" y1="14.1" x2="14.57" y2="31" stroke="#333"/><line x1="6" y1="4.04" x2="19.66" y2="11.2"/><line x1="10.06" y1="2.18" x2="23.44" y2="9.44"/><polyline points="19.66,11.2 19.66,17.6 24.17,15.27 24.17,9.44"/></g><g stroke="#3d7fe0" stroke-width="1.2" stroke-linecap="round"><line x1="2.2" y1="19.3" x2="5" y2="20.3"/><line x1="2.2" y1="21.5" x2="4.2" y2="22.3"/></g></svg>
<svg class="ab" style="left:2276px;top:564px;" width="32" height="32" viewBox="0 0 32 32"><defs><linearGradient id="fg" x1="0" y1="0" x2="1" y2="1"><stop offset="0" stop-color="#f8efc0"/><stop offset="1" stop-color="#ebd058"/></linearGradient></defs><rect x="0.8" y="10.4" width="26" height="20.6" fill="#fdf6dc" stroke="#d9a84e" stroke-width="1.6"/><rect x="4" y="13" width="8" height="5.6" fill="#f3df90"/><rect x="10.6" y="0.8" width="20.6" height="20.5" fill="#eef3fb" stroke="#7fa2d8" stroke-width="1.6"/><line x1="14" y1="5.1" x2="27.5" y2="5.1" stroke="#9fcc98" stroke-width="1.8" stroke-linecap="round"/><g stroke="#b9cdea" stroke-width="1.5"><line x1="14" y1="9" x2="27.5" y2="9"/><line x1="14" y1="13" x2="27.5" y2="13"/><line x1="15.6" y1="9" x2="15.6" y2="17"/></g><path d="M0.8,18.6 L4,18.6 L11.8,18.6 L11.8,16.8 L27.8,16.8 L27.8,31 L0.8,31 Z" fill="#fbf1cc" stroke="#d9a24e" stroke-width="1.6"/><rect x="4" y="20.2" width="21" height="8.6" fill="url(#fg)"/><line x1="0.8" y1="30.8" x2="27.8" y2="30.8" stroke="#cf8638" stroke-width="1.6"/></svg>
<svg class="ab" style="left:2408px;top:564px;" width="32" height="32" viewBox="0 0 32 32"><defs><linearGradient id="fg" x1="0" y1="0" x2="1" y2="1"><stop offset="0" stop-color="#f8efc0"/><stop offset="1" stop-color="#ebd058"/></linearGradient></defs><rect x="0.8" y="10.4" width="26" height="20.6" fill="#fdf6dc" stroke="#d9a84e" stroke-width="1.6"/><rect x="4" y="13" width="8" height="5.6" fill="#f3df90"/><rect x="10.6" y="0.8" width="20.6" height="20.5" fill="#eef3fb" stroke="#7fa2d8" stroke-width="1.6"/><line x1="14" y1="5.1" x2="27.5" y2="5.1" stroke="#9fcc98" stroke-width="1.8" stroke-linecap="round"/><g stroke="#b9cdea" stroke-width="1.5"><line x1="14" y1="9" x2="27.5" y2="9"/><line x1="14" y1="13" x2="27.5" y2="13"/><line x1="15.6" y1="9" x2="15.6" y2="17"/></g><path d="M0.8,18.6 L4,18.6 L11.8,18.6 L11.8,16.8 L27.8,16.8 L27.8,31 L0.8,31 Z" fill="#fbf1cc" stroke="#d9a24e" stroke-width="1.6"/><rect x="4" y="20.2" width="21" height="8.6" fill="url(#fg)"/><line x1="0.8" y1="30.8" x2="27.8" y2="30.8" stroke="#cf8638" stroke-width="1.6"/></svg>
<svg class="ab" style="left:38px;top:664.3px;" width="24" height="24" viewBox="0 0 24 24"><rect width="24" height="24" rx="4" fill="#888"/><rect x="3.6" y="9.7" width="16.8" height="4.4" fill="#fff"/><rect x="9.75" y="3.9" width="4.4" height="16" fill="#fff"/></svg>
<svg class="ab" style="left:95.8px;top:663.9px;" width="28" height="28" viewBox="0 0 28 28"><rect x="1.5" y="1.5" width="25" height="25" rx="5" fill="none" stroke="#8a8a8a" stroke-width="3"/></svg>
<svg class="ab" style="left:1179.5px;top:654px;" width="89" height="50" viewBox="0 0 89 50"><rect x="0" y="0" width="89" height="50" fill="#5e9f53"/><rect x="7" y="3.8" width="75" height="42" fill="#69ae5e"/><rect x="12.2" y="8" width="3.2" height="33.6" rx="1.6" fill="#579a4c"/><rect x="19.9" y="8" width="3.2" height="33.6" rx="1.6" fill="#579a4c"/><rect x="27.6" y="8" width="3.2" height="33.6" rx="1.6" fill="#579a4c"/><rect x="35.3" y="8" width="3.2" height="33.6" rx="1.6" fill="#579a4c"/><rect x="43.0" y="8" width="3.2" height="33.6" rx="1.6" fill="#579a4c"/><rect x="50.7" y="8" width="3.2" height="33.6" rx="1.6" fill="#579a4c"/><rect x="58.4" y="8" width="3.2" height="33.6" rx="1.6" fill="#579a4c"/><rect x="66.1" y="8" width="3.2" height="33.6" rx="1.6" fill="#579a4c"/><rect x="73.8" y="8" width="3.2" height="33.6" rx="1.6" fill="#579a4c"/><rect x="19" y="14" width="47" height="22.5" rx="1" fill="#fdfcfa"/><text x="42.5" y="30.2" font-family="Liberation Sans" font-weight="bold" font-size="14" text-anchor="middle" fill="#000" textLength="34" lengthAdjust="spacingAndGlyphs">20FT</text><rect x="23.4" y="46.2" width="9" height="3.8" fill="#2d652a"/><rect x="56" y="46.2" width="9" height="3.8" fill="#2d652a"/><g fill="#2f6a2c"><circle cx="4" cy="46" r="1.7"/><circle cx="84.7" cy="46" r="1.7"/><circle cx="4" cy="1" r="1.7"/><circle cx="84.7" cy="1" r="1.7"/></g></svg>
<svg class="ab" style="left:1996px;top:660px;" width="40" height="42" viewBox="0 0 29.1 31.5"><g fill="none" stroke="#111" stroke-width="1.5" stroke-linejoin="round"><polygon points="14.57,0.5 0.5,6.98 0.5,24.14 14.57,31 28.6,24.14 28.6,6.98"/><polyline points="1.5,8 14.57,14.1 27.6,8"/><line x1="14.57" y1="14.1" x2="14.57" y2="31" stroke="#333"/><line x1="6" y1="4.04" x2="19.66" y2="11.2"/><line x1="10.06" y1="2.18" x2="23.44" y2="9.44"/><polyline points="19.66,11.2 19.66,17.6 24.17,15.27 24.17,9.44"/></g><g stroke="#3d7fe0" stroke-width="1.2" stroke-linecap="round"><line x1="2.2" y1="19.3" x2="5" y2="20.3"/><line x1="2.2" y1="21.5" x2="4.2" y2="22.3"/></g></svg>
<svg class="ab" style="left:2276px;top:656px;" width="32" height="32" viewBox="0 0 32 32"><defs><linearGradient id="fg" x1="0" y1="0" x2="1" y2="1"><stop offset="0" stop-color="#f8efc0"/><stop offset="1" stop-color="#ebd058"/></linearGradient></defs><rect x="0.8" y="10.4" width="26" height="20.6" fill="#fdf6dc" stroke="#d9a84e" stroke-width="1.6"/><rect x="4" y="13" width="8" height="5.6" fill="#f3df90"/><rect x="10.6" y="0.8" width="20.6" height="20.5" fill="#eef3fb" stroke="#7fa2d8" stroke-width="1.6"/><line x1="14" y1="5.1" x2="27.5" y2="5.1" stroke="#9fcc98" stroke-width="1.8" stroke-linecap="round"/><g stroke="#b9cdea" stroke-width="1.5"><line x1="14" y1="9" x2="27.5" y2="9"/><line x1="14" y1="13" x2="27.5" y2="13"/><line x1="15.6" y1="9" x2="15.6" y2="17"/></g><path d="M0.8,18.6 L4,18.6 L11.8,18.6 L11.8,16.8 L27.8,16.8 L27.8,31 L0.8,31 Z" fill="#fbf1cc" stroke="#d9a24e" stroke-width="1.6"/><rect x="4" y="20.2" width="21" height="8.6" fill="url(#fg)"/><line x1="0.8" y1="30.8" x2="27.8" y2="30.8" stroke="#cf8638" stroke-width="1.6"/></svg>
<svg class="ab" style="left:2408px;top:656px;" width="32" height="32" viewBox="0 0 32 32"><defs><linearGradient id="fg" x1="0" y1="0" x2="1" y2="1"><stop offset="0" stop-color="#f8efc0"/><stop offset="1" stop-color="#ebd058"/></linearGradient></defs><rect x="0.8" y="10.4" width="26" height="20.6" fill="#fdf6dc" stroke="#d9a84e" stroke-width="1.6"/><rect x="4" y="13" width="8" height="5.6" fill="#f3df90"/><rect x="10.6" y="0.8" width="20.6" height="20.5" fill="#eef3fb" stroke="#7fa2d8" stroke-width="1.6"/><line x1="14" y1="5.1" x2="27.5" y2="5.1" stroke="#9fcc98" stroke-width="1.8" stroke-linecap="round"/><g stroke="#b9cdea" stroke-width="1.5"><line x1="14" y1="9" x2="27.5" y2="9"/><line x1="14" y1="13" x2="27.5" y2="13"/><line x1="15.6" y1="9" x2="15.6" y2="17"/></g><path d="M0.8,18.6 L4,18.6 L11.8,18.6 L11.8,16.8 L27.8,16.8 L27.8,31 L0.8,31 Z" fill="#fbf1cc" stroke="#d9a24e" stroke-width="1.6"/><rect x="4" y="20.2" width="21" height="8.6" fill="url(#fg)"/><line x1="0.8" y1="30.8" x2="27.8" y2="30.8" stroke="#cf8638" stroke-width="1.6"/></svg>
<svg class="ab" style="left:38px;top:756.3px;" width="24" height="24" viewBox="0 0 24 24"><rect width="24" height="24" rx="4" fill="#888"/><rect x="3.6" y="9.7" width="16.8" height="4.4" fill="#fff"/><rect x="9.75" y="3.9" width="4.4" height="16" fill="#fff"/></svg>
<svg class="ab" style="left:95.8px;top:755.9px;" width="28" height="28" viewBox="0 0 28 28"><rect x="1.5" y="1.5" width="25" height="25" rx="5" fill="none" stroke="#8a8a8a" stroke-width="3"/></svg>
<svg class="ab" style="left:1179.5px;top:746px;" width="89" height="50" viewBox="0 0 89 50"><rect x="0" y="0" width="89" height="50" fill="#5e9f53"/><rect x="7" y="3.8" width="75" height="42" fill="#69ae5e"/><rect x="12.2" y="8" width="3.2" height="33.6" rx="1.6" fill="#579a4c"/><rect x="19.9" y="8" width="3.2" height="33.6" rx="1.6" fill="#579a4c"/><rect x="27.6" y="8" width="3.2" height="33.6" rx="1.6" fill="#579a4c"/><rect x="35.3" y="8" width="3.2" height="33.6" rx="1.6" fill="#579a4c"/><rect x="43.0" y="8" width="3.2" height="33.6" rx="1.6" fill="#579a4c"/><rect x="50.7" y="8" width="3.2" height="33.6" rx="1.6" fill="#579a4c"/><rect x="58.4" y="8" width="3.2" height="33.6" rx="1.6" fill="#579a4c"/><rect x="66.1" y="8" width="3.2" height="33.6" rx="1.6" fill="#579a4c"/><rect x="73.8" y="8" width="3.2" height="33.6" rx="1.6" fill="#579a4c"/><rect x="19" y="14" width="47" height="22.5" rx="1" fill="#fdfcfa"/><text x="42.5" y="30.2" font-family="Liberation Sans" font-weight="bold" font-size="14" text-anchor="middle" fill="#000" textLength="34" lengthAdjust="spacingAndGlyphs">20FT</text><rect x="23.4" y="46.2" width="9" height="3.8" fill="#2d652a"/><rect x="56" y="46.2" width="9" height="3.8" fill="#2d652a"/><g fill="#2f6a2c"><circle cx="4" cy="46" r="1.7"/><circle cx="84.7" cy="46" r="1.7"/><circle cx="4" cy="1" r="1.7"/><circle cx="84.7" cy="1" r="1.7"/></g></svg>
<svg class="ab" style="left:1996px;top:752px;" width="40" height="42" viewBox="0 0 29.1 31.5"><g fill="none" stroke="#111" stroke-width="1.5" stroke-linejoin="round"><polygon points="14.57,0.5 0.5,6.98 0.5,24.14 14.57,31 28.6,24.14 28.6,6.98"/><polyline points="1.5,8 14.57,14.1 27.6,8"/><line x1="14.57" y1="14.1" x2="14.57" y2="31" stroke="#333"/><line x1="6" y1="4.04" x2="19.66" y2="11.2"/><line x1="10.06" y1="2.18" x2="23.44" y2="9.44"/><polyline points="19.66,11.2 19.66,17.6 24.17,15.27 24.17,9.44"/></g><g stroke="#3d7fe0" stroke-width="1.2" stroke-linecap="round"><line x1="2.2" y1="19.3" x2="5" y2="20.3"/><line x1="2.2" y1="21.5" x2="4.2" y2="22.3"/></g></svg>
<svg class="ab" style="left:2276px;top:748px;" width="32" height="32" viewBox="0 0 32 32"><defs><linearGradient id="fg" x1="0" y1="0" x2="1" y2="1"><stop offset="0" stop-color="#f8efc0"/><stop offset="1" stop-color="#ebd058"/></linearGradient></defs><rect x="0.8" y="10.4" width="26" height="20.6" fill="#fdf6dc" stroke="#d9a84e" stroke-width="1.6"/><rect x="4" y="13" width="8" height="5.6" fill="#f3df90"/><rect x="10.6" y="0.8" width="20.6" height="20.5" fill="#eef3fb" stroke="#7fa2d8" stroke-width="1.6"/><line x1="14" y1="5.1" x2="27.5" y2="5.1" stroke="#9fcc98" stroke-width="1.8" stroke-linecap="round"/><g stroke="#b9cdea" stroke-width="1.5"><line x1="14" y1="9" x2="27.5" y2="9"/><line x1="14" y1="13" x2="27.5" y2="13"/><line x1="15.6" y1="9" x2="15.6" y2="17"/></g><path d="M0.8,18.6 L4,18.6 L11.8,18.6 L11.8,16.8 L27.8,16.8 L27.8,31 L0.8,31 Z" fill="#fbf1cc" stroke="#d9a24e" stroke-width="1.6"/><rect x="4" y="20.2" width="21" height="8.6" fill="url(#fg)"/><line x1="0.8" y1="30.8" x2="27.8" y2="30.8" stroke="#cf8638" stroke-width="1.6"/></svg>
<svg class="ab" style="left:2408px;top:748px;" width="32" height="32" viewBox="0 0 32 32"><defs><linearGradient id="fg" x1="0" y1="0" x2="1" y2="1"><stop offset="0" stop-color="#f8efc0"/><stop offset="1" stop-color="#ebd058"/></linearGradient></defs><rect x="0.8" y="10.4" width="26" height="20.6" fill="#fdf6dc" stroke="#d9a84e" stroke-width="1.6"/><rect x="4" y="13" width="8" height="5.6" fill="#f3df90"/><rect x="10.6" y="0.8" width="20.6" height="20.5" fill="#eef3fb" stroke="#7fa2d8" stroke-width="1.6"/><line x1="14" y1="5.1" x2="27.5" y2="5.1" stroke="#9fcc98" stroke-width="1.8" stroke-linecap="round"/><g stroke="#b9cdea" stroke-width="1.5"><line x1="14" y1="9" x2="27.5" y2="9"/><line x1="14" y1="13" x2="27.5" y2="13"/><line x1="15.6" y1="9" x2="15.6" y2="17"/></g><path d="M0.8,18.6 L4,18.6 L11.8,18.6 L11.8,16.8 L27.8,16.8 L27.8,31 L0.8,31 Z" fill="#fbf1cc" stroke="#d9a24e" stroke-width="1.6"/><rect x="4" y="20.2" width="21" height="8.6" fill="url(#fg)"/><line x1="0.8" y1="30.8" x2="27.8" y2="30.8" stroke="#cf8638" stroke-width="1.6"/></svg>
<svg class="ab" style="left:38px;top:848.3px;" width="24" height="24" viewBox="0 0 24 24"><rect width="24" height="24" rx="4" fill="#888"/><rect x="3.6" y="9.7" width="16.8" height="4.4" fill="#fff"/><rect x="9.75" y="3.9" width="4.4" height="16" fill="#fff"/></svg>
<svg class="ab" style="left:95.8px;top:847.9px;" width="28" height="28" viewBox="0 0 28 28"><rect x="1.5" y="1.5" width="25" height="25" rx="5" fill="none" stroke="#8a8a8a" stroke-width="3"/></svg>
<svg class="ab" style="left:1178px;top:838px;" width="124" height="50" viewBox="0 0 124 50"><defs><linearGradient id="cg" x1="0" y1="1" x2="1" y2="0"><stop offset="0" stop-color="#6a9fdc"/><stop offset=".5" stop-color="#78abe0"/><stop offset="1" stop-color="#92c0ea"/></linearGradient></defs><rect x="0" y="0" width="124" height="50" fill="url(#cg)"/><rect x="0" y="0" width="124" height="1" fill="#333"/><rect x="0" y="0" width="3.5" height="44" fill="#4a80c8"/><rect x="6.8" y="4.8" width="3.2" height="37.1" fill="#3a72bb"/><rect x="14.1" y="4.8" width="3.2" height="37.1" fill="#3a72bb"/><rect x="21.3" y="4.8" width="3.2" height="37.1" fill="#3a72bb"/><rect x="28.6" y="4.8" width="3.2" height="37.1" fill="#3a72bb"/><rect x="35.9" y="4.8" width="3.2" height="37.1" fill="#3a72bb"/><rect x="43.1" y="4.8" width="3.2" height="37.1" fill="#3a72bb"/><rect x="50.4" y="4.8" width="3.2" height="37.1" fill="#3a72bb"/><rect x="57.7" y="4.8" width="3.2" height="37.1" fill="#3a72bb"/><rect x="65.0" y="4.8" width="3.2" height="37.1" fill="#3a72bb"/><rect x="72.2" y="4.8" width="3.2" height="37.1" fill="#3a72bb"/><rect x="79.5" y="4.8" width="3.2" height="37.1" fill="#3a72bb"/><rect x="86.8" y="4.8" width="3.2" height="37.1" fill="#3a72bb"/><rect x="94.0" y="4.8" width="3.2" height="37.1" fill="#3a72bb"/><rect x="101.3" y="4.8" width="3.2" height="37.1" fill="#3a72bb"/><rect x="108.6" y="4.8" width="3.2" height="37.1" fill="#3a72bb"/><rect x="115.8" y="4.8" width="3.2" height="37.1" fill="#3a72bb"/><rect x="0" y="43.5" width="124" height="6.5" fill="#4c78b2"/><rect x="15.8" y="47.8" width="15.5" height="2.2" fill="#333"/><rect x="97" y="47.8" width="15.5" height="2.2" fill="#333"/><rect x="31.6" y="12.3" width="61" height="25.3" rx="1.5" fill="#fdfcfa"/><text x="62.2" y="30" font-family="Liberation Sans" font-weight="bold" font-size="15.5" text-anchor="middle" fill="#000" textLength="39.4" lengthAdjust="spacingAndGlyphs">40FT</text></svg>
<svg class="ab" style="left:1997px;top:846px;" width="37" height="40" viewBox="0 0 27.5 30"><rect x="0.7" y="0.7" width="20" height="28.5" rx="1.8" fill="#dff7fb" stroke="#3a3060" stroke-width="1.2"/><g stroke-width="1" fill="none"><rect x="2.4" y="4.3" width="2.8" height="2.6" stroke="#6b5f8a" fill="#f7c2cc"/><rect x="2.4" y="11.4" width="2.8" height="2.6" stroke="#6b5f8a" fill="#f7c2cc"/><rect x="2.4" y="19" width="2.8" height="2.3" stroke="#5a4f7a"/><g stroke="#8f96b4" stroke-width="1.1"><line x1="7" y1="5.5" x2="17.8" y2="5.5"/><line x1="7" y1="9.1" x2="17.8" y2="9.1"/><line x1="7" y1="13.1" x2="17.8" y2="13.1"/><line x1="7" y1="16.1" x2="17.8" y2="16.1"/><line x1="7" y1="20" x2="17.8" y2="20" stroke="#4a4370"/><line x1="7" y1="23.5" x2="17.8" y2="23.5"/></g></g><line x1="16" y1="19" x2="26.5" y2="3.8" stroke="#2c2550" stroke-width="3.6" stroke-linecap="round"/><line x1="16.3" y1="18.6" x2="24.5" y2="6.6" stroke="#6cc4f2" stroke-width="1.6"/><line x1="24.3" y1="7" x2="26.2" y2="4.3" stroke="#f06c8c" stroke-width="1.8"/></svg>
<svg class="ab" style="left:2276px;top:840px;" width="32" height="32" viewBox="0 0 32 32"><defs><linearGradient id="fg" x1="0" y1="0" x2="1" y2="1"><stop offset="0" stop-color="#f8efc0"/><stop offset="1" stop-color="#ebd058"/></linearGradient></defs><rect x="0.8" y="10.4" width="26" height="20.6" fill="#fdf6dc" stroke="#d9a84e" stroke-width="1.6"/><rect x="4" y="13" width="8" height="5.6" fill="#f3df90"/><rect x="10.6" y="0.8" width="20.6" height="20.5" fill="#eef3fb" stroke="#7fa2d8" stroke-width="1.6"/><line x1="14" y1="5.1" x2="27.5" y2="5.1" stroke="#9fcc98" stroke-width="1.8" stroke-linecap="round"/><g stroke="#b9cdea" stroke-width="1.5"><line x1="14" y1="9" x2="27.5" y2="9"/><line x1="14" y1="13" x2="27.5" y2="13"/><line x1="15.6" y1="9" x2="15.6" y2="17"/></g><path d="M0.8,18.6 L4,18.6 L11.8,18.6 L11.8,16.8 L27.8,16.8 L27.8,31 L0.8,31 Z" fill="#fbf1cc" stroke="#d9a24e" stroke-width="1.6"/><rect x="4" y="20.2" width="21" height="8.6" fill="url(#fg)"/><line x1="0.8" y1="30.8" x2="27.8" y2="30.8" stroke="#cf8638" stroke-width="1.6"/></svg>
<svg class="ab" style="left:2408px;top:840px;" width="32" height="32" viewBox="0 0 32 32"><defs><linearGradient id="fg" x1="0" y1="0" x2="1" y2="1"><stop offset="0" stop-color="#f8efc0"/><stop offset="1" stop-color="#ebd058"/></linearGradient></defs><rect x="0.8" y="10.4" width="26" height="20.6" fill="#fdf6dc" stroke="#d9a84e" stroke-width="1.6"/><rect x="4" y="13" width="8" height="5.6" fill="#f3df90"/><rect x="10.6" y="0.8" width="20.6" height="20.5" fill="#eef3fb" stroke="#7fa2d8" stroke-width="1.6"/><line x1="14" y1="5.1" x2="27.5" y2="5.1" stroke="#9fcc98" stroke-width="1.8" stroke-linecap="round"/><g stroke="#b9cdea" stroke-width="1.5"><line x1="14" y1="9" x2="27.5" y2="9"/><line x1="14" y1="13" x2="27.5" y2="13"/><line x1="15.6" y1="9" x2="15.6" y2="17"/></g><path d="M0.8,18.6 L4,18.6 L11.8,18.6 L11.8,16.8 L27.8,16.8 L27.8,31 L0.8,31 Z" fill="#fbf1cc" stroke="#d9a24e" stroke-width="1.6"/><rect x="4" y="20.2" width="21" height="8.6" fill="url(#fg)"/><line x1="0.8" y1="30.8" x2="27.8" y2="30.8" stroke="#cf8638" stroke-width="1.6"/></svg>
<svg class="ab" style="left:38px;top:940.3px;" width="24" height="24" viewBox="0 0 24 24"><rect width="24" height="24" rx="4" fill="#888"/><rect x="3.6" y="9.7" width="16.8" height="4.4" fill="#fff"/><rect x="9.75" y="3.9" width="4.4" height="16" fill="#fff"/></svg>
<svg class="ab" style="left:95.8px;top:939.9px;" width="28" height="28" viewBox="0 0 28 28"><rect x="1.5" y="1.5" width="25" height="25" rx="5" fill="none" stroke="#8a8a8a" stroke-width="3"/></svg>
<svg class="ab" style="left:1179.5px;top:930px;" width="89" height="50" viewBox="0 0 89 50"><rect x="0" y="0" width="89" height="50" fill="#5e9f53"/><rect x="7" y="3.8" width="75" height="42" fill="#69ae5e"/><rect x="12.2" y="8" width="3.2" height="33.6" rx="1.6" fill="#579a4c"/><rect x="19.9" y="8" width="3.2" height="33.6" rx="1.6" fill="#579a4c"/><rect x="27.6" y="8" width="3.2" height="33.6" rx="1.6" fill="#579a4c"/><rect x="35.3" y="8" width="3.2" height="33.6" rx="1.6" fill="#579a4c"/><rect x="43.0" y="8" width="3.2" height="33.6" rx="1.6" fill="#579a4c"/><rect x="50.7" y="8" width="3.2" height="33.6" rx="1.6" fill="#579a4c"/><rect x="58.4" y="8" width="3.2" height="33.6" rx="1.6" fill="#579a4c"/><rect x="66.1" y="8" width="3.2" height="33.6" rx="1.6" fill="#579a4c"/><rect x="73.8" y="8" width="3.2" height="33.6" rx="1.6" fill="#579a4c"/><rect x="19" y="14" width="47" height="22.5" rx="1" fill="#fdfcfa"/><text x="42.5" y="30.2" font-family="Liberation Sans" font-weight="bold" font-size="14" text-anchor="middle" fill="#000" textLength="34" lengthAdjust="spacingAndGlyphs">20FT</text><rect x="23.4" y="46.2" width="9" height="3.8" fill="#2d652a"/><rect x="56" y="46.2" width="9" height="3.8" fill="#2d652a"/><g fill="#2f6a2c"><circle cx="4" cy="46" r="1.7"/><circle cx="84.7" cy="46" r="1.7"/><circle cx="4" cy="1" r="1.7"/><circle cx="84.7" cy="1" r="1.7"/></g></svg>
<svg class="ab" style="left:1995px;top:940px;" width="42" height="34" viewBox="0 0 32 26"><g fill="none" stroke="#111" stroke-width="1.3" stroke-linejoin="round"><path d="M4.4,0.6 L27.8,0.6 L31.6,7.6 M4.4,0.6 L0.4,7.6"/><line x1="4.4" y1="7.3" x2="28.2" y2="7.3"/><path d="M0.4,7.6 Q0.6,10.9 3.8,10.9 Q7.2,10.9 8.2,7.8 Q9.4,10.9 12.2,10.9 Q15,10.9 16,7.8 Q17,10.9 19.8,10.9 Q22.6,10.9 23.8,7.8 Q24.8,10.9 27.8,10.9 Q31.4,10.9 31.6,7.6"/><path d="M2.4,10.6 L2.4,25.6 L30,25.6 L30,10.6"/></g><rect x="4.8" y="13.4" width="14" height="10" fill="none" stroke="#3f7fe6" stroke-width="1.5"/><rect x="21" y="13.4" width="6.4" height="12" fill="none" stroke="#223" stroke-width="1.4"/><line x1="21" y1="22.6" x2="27.4" y2="22.6" stroke="#223" stroke-width="1.2"/></svg>
<svg class="ab" style="left:2276px;top:932px;" width="32" height="32" viewBox="0 0 32 32"><defs><linearGradient id="fg" x1="0" y1="0" x2="1" y2="1"><stop offset="0" stop-color="#f8efc0"/><stop offset="1" stop-color="#ebd058"/></linearGradient></defs><rect x="0.8" y="10.4" width="26" height="20.6" fill="#fdf6dc" stroke="#d9a84e" stroke-width="1.6"/><rect x="4" y="13" width="8" height="5.6" fill="#f3df90"/><rect x="10.6" y="0.8" width="20.6" height="20.5" fill="#eef3fb" stroke="#7fa2d8" stroke-width="1.6"/><line x1="14" y1="5.1" x2="27.5" y2="5.1" stroke="#9fcc98" stroke-width="1.8" stroke-linecap="round"/><g stroke="#b9cdea" stroke-width="1.5"><line x1="14" y1="9" x2="27.5" y2="9"/><line x1="14" y1="13" x2="27.5" y2="13"/><line x1="15.6" y1="9" x2="15.6" y2="17"/></g><path d="M0.8,18.6 L4,18.6 L11.8,18.6 L11.8,16.8 L27.8,16.8 L27.8,31 L0.8,31 Z" fill="#fbf1cc" stroke="#d9a24e" stroke-width="1.6"/><rect x="4" y="20.2" width="21" height="8.6" fill="url(#fg)"/><line x1="0.8" y1="30.8" x2="27.8" y2="30.8" stroke="#cf8638" stroke-width="1.6"/></svg>
<svg class="ab" style="left:2408px;top:932px;" width="32" height="32" viewBox="0 0 32 32"><defs><linearGradient id="fg" x1="0" y1="0" x2="1" y2="1"><stop offset="0" stop-color="#f8efc0"/><stop offset="1" stop-color="#ebd058"/></linearGradient></defs><rect x="0.8" y="10.4" width="26" height="20.6" fill="#fdf6dc" stroke="#d9a84e" stroke-width="1.6"/><rect x="4" y="13" width="8" height="5.6" fill="#f3df90"/><rect x="10.6" y="0.8" width="20.6" height="20.5" fill="#eef3fb" stroke="#7fa2d8" stroke-width="1.6"/><line x1="14" y1="5.1" x2="27.5" y2="5.1" stroke="#9fcc98" stroke-width="1.8" stroke-linecap="round"/><g stroke="#b9cdea" stroke-width="1.5"><line x1="14" y1="9" x2="27.5" y2="9"/><line x1="14" y1="13" x2="27.5" y2="13"/><line x1="15.6" y1="9" x2="15.6" y2="17"/></g><path d="M0.8,18.6 L4,18.6 L11.8,18.6 L11.8,16.8 L27.8,16.8 L27.8,31 L0.8,31 Z" fill="#fbf1cc" stroke="#d9a24e" stroke-width="1.6"/><rect x="4" y="20.2" width="21" height="8.6" fill="url(#fg)"/><line x1="0.8" y1="30.8" x2="27.8" y2="30.8" stroke="#cf8638" stroke-width="1.6"/></svg>
<svg class="ab" style="left:38px;top:1032.3px;" width="24" height="24" viewBox="0 0 24 24"><rect width="24" height="24" rx="4" fill="#888"/><rect x="3.6" y="9.7" width="16.8" height="4.4" fill="#fff"/><rect x="9.75" y="3.9" width="4.4" height="16" fill="#fff"/></svg>
<svg class="ab" style="left:95.8px;top:1031.9px;" width="28" height="28" viewBox="0 0 28 28"><rect x="1.5" y="1.5" width="25" height="25" rx="5" fill="none" stroke="#8a8a8a" stroke-width="3"/></svg>
<svg class="ab" style="left:1179.5px;top:1022px;" width="89" height="50" viewBox="0 0 89 50"><rect x="0" y="0" width="89" height="50" fill="#5e9f53"/><rect x="7" y="3.8" width="75" height="42" fill="#69ae5e"/><rect x="12.2" y="8" width="3.2" height="33.6" rx="1.6" fill="#579a4c"/><rect x="19.9" y="8" width="3.2" height="33.6" rx="1.6" fill="#579a4c"/><rect x="27.6" y="8" width="3.2" height="33.6" rx="1.6" fill="#579a4c"/><rect x="35.3" y="8" width="3.2" height="33.6" rx="1.6" fill="#579a4c"/><rect x="43.0" y="8" width="3.2" height="33.6" rx="1.6" fill="#579a4c"/><rect x="50.7" y="8" width="3.2" height="33.6" rx="1.6" fill="#579a4c"/><rect x="58.4" y="8" width="3.2" height="33.6" rx="1.6" fill="#579a4c"/><rect x="66.1" y="8" width="3.2" height="33.6" rx="1.6" fill="#579a4c"/><rect x="73.8" y="8" width="3.2" height="33.6" rx="1.6" fill="#579a4c"/><rect x="19" y="14" width="47" height="22.5" rx="1" fill="#fdfcfa"/><text x="42.5" y="30.2" font-family="Liberation Sans" font-weight="bold" font-size="14" text-anchor="middle" fill="#000" textLength="34" lengthAdjust="spacingAndGlyphs">20FT</text><rect x="23.4" y="46.2" width="9" height="3.8" fill="#2d652a"/><rect x="56" y="46.2" width="9" height="3.8" fill="#2d652a"/><g fill="#2f6a2c"><circle cx="4" cy="46" r="1.7"/><circle cx="84.7" cy="46" r="1.7"/><circle cx="4" cy="1" r="1.7"/><circle cx="84.7" cy="1" r="1.7"/></g></svg>
<svg class="ab" style="left:1995px;top:1032px;" width="42" height="34" viewBox="0 0 32 26"><g fill="none" stroke="#111" stroke-width="1.3" stroke-linejoin="round"><path d="M4.4,0.6 L27.8,0.6 L31.6,7.6 M4.4,0.6 L0.4,7.6"/><line x1="4.4" y1="7.3" x2="28.2" y2="7.3"/><path d="M0.4,7.6 Q0.6,10.9 3.8,10.9 Q7.2,10.9 8.2,7.8 Q9.4,10.9 12.2,10.9 Q15,10.9 16,7.8 Q17,10.9 19.8,10.9 Q22.6,10.9 23.8,7.8 Q24.8,10.9 27.8,10.9 Q31.4,10.9 31.6,7.6"/><path d="M2.4,10.6 L2.4,25.6 L30,25.6 L30,10.6"/></g><rect x="4.8" y="13.4" width="14" height="10" fill="none" stroke="#3f7fe6" stroke-width="1.5"/><rect x="21" y="13.4" width="6.4" height="12" fill="none" stroke="#223" stroke-width="1.4"/><line x1="21" y1="22.6" x2="27.4" y2="22.6" stroke="#223" stroke-width="1.2"/></svg>
<svg class="ab" style="left:2276px;top:1024px;" width="32" height="32" viewBox="0 0 32 32"><defs><linearGradient id="fg" x1="0" y1="0" x2="1" y2="1"><stop offset="0" stop-color="#f8efc0"/><stop offset="1" stop-color="#ebd058"/></linearGradient></defs><rect x="0.8" y="10.4" width="26" height="20.6" fill="#fdf6dc" stroke="#d9a84e" stroke-width="1.6"/><rect x="4" y="13" width="8" height="5.6" fill="#f3df90"/><rect x="10.6" y="0.8" width="20.6" height="20.5" fill="#eef3fb" stroke="#7fa2d8" stroke-width="1.6"/><line x1="14" y1="5.1" x2="27.5" y2="5.1" stroke="#9fcc98" stroke-width="1.8" stroke-linecap="round"/><g stroke="#b9cdea" stroke-width="1.5"><line x1="14" y1="9" x2="27.5" y2="9"/><line x1="14" y1="13" x2="27.5" y2="13"/><line x1="15.6" y1="9" x2="15.6" y2="17"/></g><path d="M0.8,18.6 L4,18.6 L11.8,18.6 L11.8,16.8 L27.8,16.8 L27.8,31 L0.8,31 Z" fill="#fbf1cc" stroke="#d9a24e" stroke-width="1.6"/><rect x="4" y="20.2" width="21" height="8.6" fill="url(#fg)"/><line x1="0.8" y1="30.8" x2="27.8" y2="30.8" stroke="#cf8638" stroke-width="1.6"/></svg>
<svg class="ab" style="left:2408px;top:1024px;" width="32" height="32" viewBox="0 0 32 32"><defs><linearGradient id="fg" x1="0" y1="0" x2="1" y2="1"><stop offset="0" stop-color="#f8efc0"/><stop offset="1" stop-color="#ebd058"/></linearGradient></defs><rect x="0.8" y="10.4" width="26" height="20.6" fill="#fdf6dc" stroke="#d9a84e" stroke-width="1.6"/><rect x="4" y="13" width="8" height="5.6" fill="#f3df90"/><rect x="10.6" y="0.8" width="20.6" height="20.5" fill="#eef3fb" stroke="#7fa2d8" stroke-width="1.6"/><line x1="14" y1="5.1" x2="27.5" y2="5.1" stroke="#9fcc98" stroke-width="1.8" stroke-linecap="round"/><g stroke="#b9cdea" stroke-width="1.5"><line x1="14" y1="9" x2="27.5" y2="9"/><line x1="14" y1="13" x2="27.5" y2="13"/><line x1="15.6" y1="9" x2="15.6" y2="17"/></g><path d="M0.8,18.6 L4,18.6 L11.8,18.6 L11.8,16.8 L27.8,16.8 L27.8,31 L0.8,31 Z" fill="#fbf1cc" stroke="#d9a24e" stroke-width="1.6"/><rect x="4" y="20.2" width="21" height="8.6" fill="url(#fg)"/><line x1="0.8" y1="30.8" x2="27.8" y2="30.8" stroke="#cf8638" stroke-width="1.6"/></svg>
<svg class="ab" style="left:38px;top:1124.3px;" width="24" height="24" viewBox="0 0 24 24"><rect width="24" height="24" rx="4" fill="#888"/><rect x="3.6" y="9.7" width="16.8" height="4.4" fill="#fff"/><rect x="9.75" y="3.9" width="4.4" height="16" fill="#fff"/></svg>
<svg class="ab" style="left:95.8px;top:1123.9px;" width="28" height="28" viewBox="0 0 28 28"><rect x="1.5" y="1.5" width="25" height="25" rx="5" fill="none" stroke="#8a8a8a" stroke-width="3"/></svg>
<svg class="ab" style="left:1179.5px;top:1114px;" width="89" height="50" viewBox="0 0 89 50"><rect x="0" y="0" width="89" height="50" fill="#5e9f53"/><rect x="7" y="3.8" width="75" height="42" fill="#69ae5e"/><rect x="12.2" y="8" width="3.2" height="33.6" rx="1.6" fill="#579a4c"/><rect x="19.9" y="8" width="3.2" height="33.6" rx="1.6" fill="#579a4c"/><rect x="27.6" y="8" width="3.2" height="33.6" rx="1.6" fill="#579a4c"/><rect x="35.3" y="8" width="3.2" height="33.6" rx="1.6" fill="#579a4c"/><rect x="43.0" y="8" width="3.2" height="33.6" rx="1.6" fill="#579a4c"/><rect x="50.7" y="8" width="3.2" height="33.6" rx="1.6" fill="#579a4c"/><rect x="58.4" y="8" width="3.2" height="33.6" rx="1.6" fill="#579a4c"/><rect x="66.1" y="8" width="3.2" height="33.6" rx="1.6" fill="#579a4c"/><rect x="73.8" y="8" width="3.2" height="33.6" rx="1.6" fill="#579a4c"/><rect x="19" y="14" width="47" height="22.5" rx="1" fill="#fdfcfa"/><text x="42.5" y="30.2" font-family="Liberation Sans" font-weight="bold" font-size="14" text-anchor="middle" fill="#000" textLength="34" lengthAdjust="spacingAndGlyphs">20FT</text><rect x="23.4" y="46.2" width="9" height="3.8" fill="#2d652a"/><rect x="56" y="46.2" width="9" height="3.8" fill="#2d652a"/><g fill="#2f6a2c"><circle cx="4" cy="46" r="1.7"/><circle cx="84.7" cy="46" r="1.7"/><circle cx="4" cy="1" r="1.7"/><circle cx="84.7" cy="1" r="1.7"/></g></svg>
<svg class="ab" style="left:1995px;top:1124px;" width="42" height="34" viewBox="0 0 32 26"><g fill="none" stroke="#111" stroke-width="1.3" stroke-linejoin="round"><path d="M4.4,0.6 L27.8,0.6 L31.6,7.6 M4.4,0.6 L0.4,7.6"/><line x1="4.4" y1="7.3" x2="28.2" y2="7.3"/><path d="M0.4,7.6 Q0.6,10.9 3.8,10.9 Q7.2,10.9 8.2,7.8 Q9.4,10.9 12.2,10.9 Q15,10.9 16,7.8 Q17,10.9 19.8,10.9 Q22.6,10.9 23.8,7.8 Q24.8,10.9 27.8,10.9 Q31.4,10.9 31.6,7.6"/><path d="M2.4,10.6 L2.4,25.6 L30,25.6 L30,10.6"/></g><rect x="4.8" y="13.4" width="14" height="10" fill="none" stroke="#3f7fe6" stroke-width="1.5"/><rect x="21" y="13.4" width="6.4" height="12" fill="none" stroke="#223" stroke-width="1.4"/><line x1="21" y1="22.6" x2="27.4" y2="22.6" stroke="#223" stroke-width="1.2"/></svg>
<svg class="ab" style="left:2276px;top:1116px;" width="32" height="32" viewBox="0 0 32 32"><defs><linearGradient id="fg" x1="0" y1="0" x2="1" y2="1"><stop offset="0" stop-color="#f8efc0"/><stop offset="1" stop-color="#ebd058"/></linearGradient></defs><rect x="0.8" y="10.4" width="26" height="20.6" fill="#fdf6dc" stroke="#d9a84e" stroke-width="1.6"/><rect x="4" y="13" width="8" height="5.6" fill="#f3df90"/><rect x="10.6" y="0.8" width="20.6" height="20.5" fill="#eef3fb" stroke="#7fa2d8" stroke-width="1.6"/><line x1="14" y1="5.1" x2="27.5" y2="5.1" stroke="#9fcc98" stroke-width="1.8" stroke-linecap="round"/><g stroke="#b9cdea" stroke-width="1.5"><line x1="14" y1="9" x2="27.5" y2="9"/><line x1="14" y1="13" x2="27.5" y2="13"/><line x1="15.6" y1="9" x2="15.6" y2="17"/></g><path d="M0.8,18.6 L4,18.6 L11.8,18.6 L11.8,16.8 L27.8,16.8 L27.8,31 L0.8,31 Z" fill="#fbf1cc" stroke="#d9a24e" stroke-width="1.6"/><rect x="4" y="20.2" width="21" height="8.6" fill="url(#fg)"/><line x1="0.8" y1="30.8" x2="27.8" y2="30.8" stroke="#cf8638" stroke-width="1.6"/></svg>
<svg class="ab" style="left:2408px;top:1116px;" width="32" height="32" viewBox="0 0 32 32"><defs><linearGradient id="fg" x1="0" y1="0" x2="1" y2="1"><stop offset="0" stop-color="#f8efc0"/><stop offset="1" stop-color="#ebd058"/></linearGradient></defs><rect x="0.8" y="10.4" width="26" height="20.6" fill="#fdf6dc" stroke="#d9a84e" stroke-width="1.6"/><rect x="4" y="13" width="8" height="5.6" fill="#f3df90"/><rect x="10.6" y="0.8" width="20.6" height="20.5" fill="#eef3fb" stroke="#7fa2d8" stroke-width="1.6"/><line x1="14" y1="5.1" x2="27.5" y2="5.1" stroke="#9fcc98" stroke-width="1.8" stroke-linecap="round"/><g stroke="#b9cdea" stroke-width="1.5"><line x1="14" y1="9" x2="27.5" y2="9"/><line x1="14" y1="13" x2="27.5" y2="13"/><line x1="15.6" y1="9" x2="15.6" y2="17"/></g><path d="M0.8,18.6 L4,18.6 L11.8,18.6 L11.8,16.8 L27.8,16.8 L27.8,31 L0.8,31 Z" fill="#fbf1cc" stroke="#d9a24e" stroke-width="1.6"/><rect x="4" y="20.2" width="21" height="8.6" fill="url(#fg)"/><line x1="0.8" y1="30.8" x2="27.8" y2="30.8" stroke="#cf8638" stroke-width="1.6"/></svg>
<svg class="ab" style="left:38px;top:1216.3px;" width="24" height="24" viewBox="0 0 24 24"><rect width="24" height="24" rx="4" fill="#888"/><rect x="3.6" y="9.7" width="16.8" height="4.4" fill="#fff"/><rect x="9.75" y="3.9" width="4.4" height="16" fill="#fff"/></svg>
<svg class="ab" style="left:95.8px;top:1215.9px;" width="28" height="28" viewBox="0 0 28 28"><rect x="1.5" y="1.5" width="25" height="25" rx="5" fill="none" stroke="#8a8a8a" stroke-width="3"/></svg>
<svg class="ab" style="left:1179.5px;top:1206px;" width="89" height="50" viewBox="0 0 89 50"><rect x="0" y="0" width="89" height="50" fill="#5e9f53"/><rect x="7" y="3.8" width="75" height="42" fill="#69ae5e"/><rect x="12.2" y="8" width="3.2" height="33.6" rx="1.6" fill="#579a4c"/><rect x="19.9" y="8" width="3.2" height="33.6" rx="1.6" fill="#579a4c"/><rect x="27.6" y="8" width="3.2" height="33.6" rx="1.6" fill="#579a4c"/><rect x="35.3" y="8" width="3.2" height="33.6" rx="1.6" fill="#579a4c"/><rect x="43.0" y="8" width="3.2" height="33.6" rx="1.6" fill="#579a4c"/><rect x="50.7" y="8" width="3.2" height="33.6" rx="1.6" fill="#579a4c"/><rect x="58.4" y="8" width="3.2" height="33.6" rx="1.6" fill="#579a4c"/><rect x="66.1" y="8" width="3.2" height="33.6" rx="1.6" fill="#579a4c"/><rect x="73.8" y="8" width="3.2" height="33.6" rx="1.6" fill="#579a4c"/><rect x="19" y="14" width="47" height="22.5" rx="1" fill="#fdfcfa"/><text x="42.5" y="30.2" font-family="Liberation Sans" font-weight="bold" font-size="14" text-anchor="middle" fill="#000" textLength="34" lengthAdjust="spacingAndGlyphs">20FT</text><rect x="23.4" y="46.2" width="9" height="3.8" fill="#2d652a"/><rect x="56" y="46.2" width="9" height="3.8" fill="#2d652a"/><g fill="#2f6a2c"><circle cx="4" cy="46" r="1.7"/><circle cx="84.7" cy="46" r="1.7"/><circle cx="4" cy="1" r="1.7"/><circle cx="84.7" cy="1" r="1.7"/></g></svg>
<svg class="ab" style="left:1995px;top:1216px;" width="42" height="34" viewBox="0 0 32 26"><g fill="none" stroke="#111" stroke-width="1.3" stroke-linejoin="round"><path d="M4.4,0.6 L27.8,0.6 L31.6,7.6 M4.4,0.6 L0.4,7.6"/><line x1="4.4" y1="7.3" x2="28.2" y2="7.3"/><path d="M0.4,7.6 Q0.6,10.9 3.8,10.9 Q7.2,10.9 8.2,7.8 Q9.4,10.9 12.2,10.9 Q15,10.9 16,7.8 Q17,10.9 19.8,10.9 Q22.6,10.9 23.8,7.8 Q24.8,10.9 27.8,10.9 Q31.4,10.9 31.6,7.6"/><path d="M2.4,10.6 L2.4,25.6 L30,25.6 L30,10.6"/></g><rect x="4.8" y="13.4" width="14" height="10" fill="none" stroke="#3f7fe6" stroke-width="1.5"/><rect x="21" y="13.4" width="6.4" height="12" fill="none" stroke="#223" stroke-width="1.4"/><line x1="21" y1="22.6" x2="27.4" y2="22.6" stroke="#223" stroke-width="1.2"/></svg>
<svg class="ab" style="left:2276px;top:1208px;" width="32" height="32" viewBox="0 0 32 32"><defs><linearGradient id="fg" x1="0" y1="0" x2="1" y2="1"><stop offset="0" stop-color="#f8efc0"/><stop offset="1" stop-color="#ebd058"/></linearGradient></defs><rect x="0.8" y="10.4" width="26" height="20.6" fill="#fdf6dc" stroke="#d9a84e" stroke-width="1.6"/><rect x="4" y="13" width="8" height="5.6" fill="#f3df90"/><rect x="10.6" y="0.8" width="20.6" height="20.5" fill="#eef3fb" stroke="#7fa2d8" stroke-width="1.6"/><line x1="14" y1="5.1" x2="27.5" y2="5.1" stroke="#9fcc98" stroke-width="1.8" stroke-linecap="round"/><g stroke="#b9cdea" stroke-width="1.5"><line x1="14" y1="9" x2="27.5" y2="9"/><line x1="14" y1="13" x2="27.5" y2="13"/><line x1="15.6" y1="9" x2="15.6" y2="17"/></g><path d="M0.8,18.6 L4,18.6 L11.8,18.6 L11.8,16.8 L27.8,16.8 L27.8,31 L0.8,31 Z" fill="#fbf1cc" stroke="#d9a24e" stroke-width="1.6"/><rect x="4" y="20.2" width="21" height="8.6" fill="url(#fg)"/><line x1="0.8" y1="30.8" x2="27.8" y2="30.8" stroke="#cf8638" stroke-width="1.6"/></svg>
<svg class="ab" style="left:2408px;top:1208px;" width="32" height="32" viewBox="0 0 32 32"><defs><linearGradient id="fg" x1="0" y1="0" x2="1" y2="1"><stop offset="0" stop-color="#f8efc0"/><stop offset="1" stop-color="#ebd058"/></linearGradient></defs><rect x="0.8" y="10.4" width="26" height="20.6" fill="#fdf6dc" stroke="#d9a84e" stroke-width="1.6"/><rect x="4" y="13" width="8" height="5.6" fill="#f3df90"/><rect x="10.6" y="0.8" width="20.6" height="20.5" fill="#eef3fb" stroke="#7fa2d8" stroke-width="1.6"/><line x1="14" y1="5.1" x2="27.5" y2="5.1" stroke="#9fcc98" stroke-width="1.8" stroke-linecap="round"/><g stroke="#b9cdea" stroke-width="1.5"><line x1="14" y1="9" x2="27.5" y2="9"/><line x1="14" y1="13" x2="27.5" y2="13"/><line x1="15.6" y1="9" x2="15.6" y2="17"/></g><path d="M0.8,18.6 L4,18.6 L11.8,18.6 L11.8,16.8 L27.8,16.8 L27.8,31 L0.8,31 Z" fill="#fbf1cc" stroke="#d9a24e" stroke-width="1.6"/><rect x="4" y="20.2" width="21" height="8.6" fill="url(#fg)"/><line x1="0.8" y1="30.8" x2="27.8" y2="30.8" stroke="#cf8638" stroke-width="1.6"/></svg>
<svg class="ab" style="left:38px;top:1308.3px;" width="24" height="24" viewBox="0 0 24 24"><rect width="24" height="24" rx="4" fill="#888"/><rect x="3.6" y="9.7" width="16.8" height="4.4" fill="#fff"/><rect x="9.75" y="3.9" width="4.4" height="16" fill="#fff"/></svg>
<svg class="ab" style="left:95.8px;top:1307.9px;" width="28" height="28" viewBox="0 0 28 28"><rect x="1.5" y="1.5" width="25" height="25" rx="5" fill="none" stroke="#8a8a8a" stroke-width="3"/></svg>
<svg class="ab" style="left:1179.5px;top:1298px;" width="89" height="50" viewBox="0 0 89 50"><rect x="0" y="0" width="89" height="50" fill="#5e9f53"/><rect x="7" y="3.8" width="75" height="42" fill="#69ae5e"/><rect x="12.2" y="8" width="3.2" height="33.6" rx="1.6" fill="#579a4c"/><rect x="19.9" y="8" width="3.2" height="33.6" rx="1.6" fill="#579a4c"/><rect x="27.6" y="8" width="3.2" height="33.6" rx="1.6" fill="#579a4c"/><rect x="35.3" y="8" width="3.2" height="33.6" rx="1.6" fill="#579a4c"/><rect x="43.0" y="8" width="3.2" height="33.6" rx="1.6" fill="#579a4c"/><rect x="50.7" y="8" width="3.2" height="33.6" rx="1.6" fill="#579a4c"/><rect x="58.4" y="8" width="3.2" height="33.6" rx="1.6" fill="#579a4c"/><rect x="66.1" y="8" width="3.2" height="33.6" rx="1.6" fill="#579a4c"/><rect x="73.8" y="8" width="3.2" height="33.6" rx="1.6" fill="#579a4c"/><rect x="19" y="14" width="47" height="22.5" rx="1" fill="#fdfcfa"/><text x="42.5" y="30.2" font-family="Liberation Sans" font-weight="bold" font-size="14" text-anchor="middle" fill="#000" textLength="34" lengthAdjust="spacingAndGlyphs">20FT</text><rect x="23.4" y="46.2" width="9" height="3.8" fill="#2d652a"/><rect x="56" y="46.2" width="9" height="3.8" fill="#2d652a"/><g fill="#2f6a2c"><circle cx="4" cy="46" r="1.7"/><circle cx="84.7" cy="46" r="1.7"/><circle cx="4" cy="1" r="1.7"/><circle cx="84.7" cy="1" r="1.7"/></g></svg>
<svg class="ab" style="left:1995px;top:1308px;" width="42" height="34" viewBox="0 0 32 26"><g fill="none" stroke="#111" stroke-width="1.3" stroke-linejoin="round"><path d="M4.4,0.6 L27.8,0.6 L31.6,7.6 M4.4,0.6 L0.4,7.6"/><line x1="4.4" y1="7.3" x2="28.2" y2="7.3"/><path d="M0.4,7.6 Q0.6,10.9 3.8,10.9 Q7.2,10.9 8.2,7.8 Q9.4,10.9 12.2,10.9 Q15,10.9 16,7.8 Q17,10.9 19.8,10.9 Q22.6,10.9 23.8,7.8 Q24.8,10.9 27.8,10.9 Q31.4,10.9 31.6,7.6"/><path d="M2.4,10.6 L2.4,25.6 L30,25.6 L30,10.6"/></g><rect x="4.8" y="13.4" width="14" height="10" fill="none" stroke="#3f7fe6" stroke-width="1.5"/><rect x="21" y="13.4" width="6.4" height="12" fill="none" stroke="#223" stroke-width="1.4"/><line x1="21" y1="22.6" x2="27.4" y2="22.6" stroke="#223" stroke-width="1.2"/></svg>
<svg class="ab" style="left:2276px;top:1300px;" width="32" height="32" viewBox="0 0 32 32"><defs><linearGradient id="fg" x1="0" y1="0" x2="1" y2="1"><stop offset="0" stop-color="#f8efc0"/><stop offset="1" stop-color="#ebd058"/></linearGradient></defs><rect x="0.8" y="10.4" width="26" height="20.6" fill="#fdf6dc" stroke="#d9a84e" stroke-width="1.6"/><rect x="4" y="13" width="8" height="5.6" fill="#f3df90"/><rect x="10.6" y="0.8" width="20.6" height="20.5" fill="#eef3fb" stroke="#7fa2d8" stroke-width="1.6"/><line x1="14" y1="5.1" x2="27.5" y2="5.1" stroke="#9fcc98" stroke-width="1.8" stroke-linecap="round"/><g stroke="#b9cdea" stroke-width="1.5"><line x1="14" y1="9" x2="27.5" y2="9"/><line x1="14" y1="13" x2="27.5" y2="13"/><line x1="15.6" y1="9" x2="15.6" y2="17"/></g><path d="M0.8,18.6 L4,18.6 L11.8,18.6 L11.8,16.8 L27.8,16.8 L27.8,31 L0.8,31 Z" fill="#fbf1cc" stroke="#d9a24e" stroke-width="1.6"/><rect x="4" y="20.2" width="21" height="8.6" fill="url(#fg)"/><line x1="0.8" y1="30.8" x2="27.8" y2="30.8" stroke="#cf8638" stroke-width="1.6"/></svg>
<svg class="ab" style="left:2408px;top:1300px;" width="32" height="32" viewBox="0 0 32 32"><defs><linearGradient id="fg" x1="0" y1="0" x2="1" y2="1"><stop offset="0" stop-color="#f8efc0"/><stop offset="1" stop-color="#ebd058"/></linearGradient></defs><rect x="0.8" y="10.4" width="26" height="20.6" fill="#fdf6dc" stroke="#d9a84e" stroke-width="1.6"/><rect x="4" y="13" width="8" height="5.6" fill="#f3df90"/><rect x="10.6" y="0.8" width="20.6" height="20.5" fill="#eef3fb" stroke="#7fa2d8" stroke-width="1.6"/><line x1="14" y1="5.1" x2="27.5" y2="5.1" stroke="#9fcc98" stroke-width="1.8" stroke-linecap="round"/><g stroke="#b9cdea" stroke-width="1.5"><line x1="14" y1="9" x2="27.5" y2="9"/><line x1="14" y1="13" x2="27.5" y2="13"/><line x1="15.6" y1="9" x2="15.6" y2="17"/></g><path d="M0.8,18.6 L4,18.6 L11.8,18.6 L11.8,16.8 L27.8,16.8 L27.8,31 L0.8,31 Z" fill="#fbf1cc" stroke="#d9a24e" stroke-width="1.6"/><rect x="4" y="20.2" width="21" height="8.6" fill="url(#fg)"/><line x1="0.8" y1="30.8" x2="27.8" y2="30.8" stroke="#cf8638" stroke-width="1.6"/></svg>
<svg class="ab" style="left:38px;top:1400.3px;" width="24" height="24" viewBox="0 0 24 24"><rect width="24" height="24" rx="4" fill="#888"/><rect x="3.6" y="9.7" width="16.8" height="4.4" fill="#fff"/><rect x="9.75" y="3.9" width="4.4" height="16" fill="#fff"/></svg>
<svg class="ab" style="left:95.8px;top:1399.9px;" width="28" height="28" viewBox="0 0 28 28"><rect x="1.5" y="1.5" width="25" height="25" rx="5" fill="none" stroke="#8a8a8a" stroke-width="3"/></svg>
<svg class="ab" style="left:1179.5px;top:1390px;" width="89" height="50" viewBox="0 0 89 50"><rect x="0" y="0" width="89" height="50" fill="#5e9f53"/><rect x="7" y="3.8" width="75" height="42" fill="#69ae5e"/><rect x="12.2" y="8" width="3.2" height="33.6" rx="1.6" fill="#579a4c"/><rect x="19.9" y="8" width="3.2" height="33.6" rx="1.6" fill="#579a4c"/><rect x="27.6" y="8" width="3.2" height="33.6" rx="1.6" fill="#579a4c"/><rect x="35.3" y="8" width="3.2" height="33.6" rx="1.6" fill="#579a4c"/><rect x="43.0" y="8" width="3.2" height="33.6" rx="1.6" fill="#579a4c"/><rect x="50.7" y="8" width="3.2" height="33.6" rx="1.6" fill="#579a4c"/><rect x="58.4" y="8" width="3.2" height="33.6" rx="1.6" fill="#579a4c"/><rect x="66.1" y="8" width="3.2" height="33.6" rx="1.6" fill="#579a4c"/><rect x="73.8" y="8" width="3.2" height="33.6" rx="1.6" fill="#579a4c"/><rect x="19" y="14" width="47" height="22.5" rx="1" fill="#fdfcfa"/><text x="42.5" y="30.2" font-family="Liberation Sans" font-weight="bold" font-size="14" text-anchor="middle" fill="#000" textLength="34" lengthAdjust="spacingAndGlyphs">20FT</text><rect x="23.4" y="46.2" width="9" height="3.8" fill="#2d652a"/><rect x="56" y="46.2" width="9" height="3.8" fill="#2d652a"/><g fill="#2f6a2c"><circle cx="4" cy="46" r="1.7"/><circle cx="84.7" cy="46" r="1.7"/><circle cx="4" cy="1" r="1.7"/><circle cx="84.7" cy="1" r="1.7"/></g></svg>
<svg class="ab" style="left:1995px;top:1400px;" width="42" height="34" viewBox="0 0 32 26"><g fill="none" stroke="#111" stroke-width="1.3" stroke-linejoin="round"><path d="M4.4,0.6 L27.8,0.6 L31.6,7.6 M4.4,0.6 L0.4,7.6"/><line x1="4.4" y1="7.3" x2="28.2" y2="7.3"/><path d="M0.4,7.6 Q0.6,10.9 3.8,10.9 Q7.2,10.9 8.2,7.8 Q9.4,10.9 12.2,10.9 Q15,10.9 16,7.8 Q17,10.9 19.8,10.9 Q22.6,10.9 23.8,7.8 Q24.8,10.9 27.8,10.9 Q31.4,10.9 31.6,7.6"/><path d="M2.4,10.6 L2.4,25.6 L30,25.6 L30,10.6"/></g><rect x="4.8" y="13.4" width="14" height="10" fill="none" stroke="#3f7fe6" stroke-width="1.5"/><rect x="21" y="13.4" width="6.4" height="12" fill="none" stroke="#223" stroke-width="1.4"/><line x1="21" y1="22.6" x2="27.4" y2="22.6" stroke="#223" stroke-width="1.2"/></svg>
<svg class="ab" style="left:2276px;top:1392px;" width="32" height="32" viewBox="0 0 32 32"><defs><linearGradient id="fg" x1="0" y1="0" x2="1" y2="1"><stop offset="0" stop-color="#f8efc0"/><stop offset="1" stop-color="#ebd058"/></linearGradient></defs><rect x="0.8" y="10.4" width="26" height="20.6" fill="#fdf6dc" stroke="#d9a84e" stroke-width="1.6"/><rect x="4" y="13" width="8" height="5.6" fill="#f3df90"/><rect x="10.6" y="0.8" width="20.6" height="20.5" fill="#eef3fb" stroke="#7fa2d8" stroke-width="1.6"/><line x1="14" y1="5.1" x2="27.5" y2="5.1" stroke="#9fcc98" stroke-width="1.8" stroke-linecap="round"/><g stroke="#b9cdea" stroke-width="1.5"><line x1="14" y1="9" x2="27.5" y2="9"/><line x1="14" y1="13" x2="27.5" y2="13"/><line x1="15.6" y1="9" x2="15.6" y2="17"/></g><path d="M0.8,18.6 L4,18.6 L11.8,18.6 L11.8,16.8 L27.8,16.8 L27.8,31 L0.8,31 Z" fill="#fbf1cc" stroke="#d9a24e" stroke-width="1.6"/><rect x="4" y="20.2" width="21" height="8.6" fill="url(#fg)"/><line x1="0.8" y1="30.8" x2="27.8" y2="30.8" stroke="#cf8638" stroke-width="1.6"/></svg>
<svg class="ab" style="left:2408px;top:1392px;" width="32" height="32" viewBox="0 0 32 32"><defs><linearGradient id="fg" x1="0" y1="0" x2="1" y2="1"><stop offset="0" stop-color="#f8efc0"/><stop offset="1" stop-color="#ebd058"/></linearGradient></defs><rect x="0.8" y="10.4" width="26" height="20.6" fill="#fdf6dc" stroke="#d9a84e" stroke-width="1.6"/><rect x="4" y="13" width="8" height="5.6" fill="#f3df90"/><rect x="10.6" y="0.8" width="20.6" height="20.5" fill="#eef3fb" stroke="#7fa2d8" stroke-width="1.6"/><line x1="14" y1="5.1" x2="27.5" y2="5.1" stroke="#9fcc98" stroke-width="1.8" stroke-linecap="round"/><g stroke="#b9cdea" stroke-width="1.5"><line x1="14" y1="9" x2="27.5" y2="9"/><line x1="14" y1="13" x2="27.5" y2="13"/><line x1="15.6" y1="9" x2="15.6" y2="17"/></g><path d="M0.8,18.6 L4,18.6 L11.8,18.6 L11.8,16.8 L27.8,16.8 L27.8,31 L0.8,31 Z" fill="#fbf1cc" stroke="#d9a24e" stroke-width="1.6"/><rect x="4" y="20.2" width="21" height="8.6" fill="url(#fg)"/><line x1="0.8" y1="30.8" x2="27.8" y2="30.8" stroke="#cf8638" stroke-width="1.6"/></svg>
<svg class="ab" style="left:38px;top:1492.3px;" width="24" height="24" viewBox="0 0 24 24"><rect width="24" height="24" rx="4" fill="#888"/><rect x="3.6" y="9.7" width="16.8" height="4.4" fill="#fff"/><rect x="9.75" y="3.9" width="4.4" height="16" fill="#fff"/></svg>
<svg class="ab" style="left:95.8px;top:1491.9px;" width="28" height="28" viewBox="0 0 28 28"><rect x="1.5" y="1.5" width="25" height="25" rx="5" fill="none" stroke="#8a8a8a" stroke-width="3"/></svg>
<svg class="ab" style="left:1179.5px;top:1482px;" width="89" height="50" viewBox="0 0 89 50"><rect x="0" y="0" width="89" height="50" fill="#5e9f53"/><rect x="7" y="3.8" width="75" height="42" fill="#69ae5e"/><rect x="12.2" y="8" width="3.2" height="33.6" rx="1.6" fill="#579a4c"/><rect x="19.9" y="8" width="3.2" height="33.6" rx="1.6" fill="#579a4c"/><rect x="27.6" y="8" width="3.2" height="33.6" rx="1.6" fill="#579a4c"/><rect x="35.3" y="8" width="3.2" height="33.6" rx="1.6" fill="#579a4c"/><rect x="43.0" y="8" width="3.2" height="33.6" rx="1.6" fill="#579a4c"/><rect x="50.7" y="8" width="3.2" height="33.6" rx="1.6" fill="#579a4c"/><rect x="58.4" y="8" width="3.2" height="33.6" rx="1.6" fill="#579a4c"/><rect x="66.1" y="8" width="3.2" height="33.6" rx="1.6" fill="#579a4c"/><rect x="73.8" y="8" width="3.2" height="33.6" rx="1.6" fill="#579a4c"/><rect x="19" y="14" width="47" height="22.5" rx="1" fill="#fdfcfa"/><text x="42.5" y="30.2" font-family="Liberation Sans" font-weight="bold" font-size="14" text-anchor="middle" fill="#000" textLength="34" lengthAdjust="spacingAndGlyphs">20FT</text><rect x="23.4" y="46.2" width="9" height="3.8" fill="#2d652a"/><rect x="56" y="46.2" width="9" height="3.8" fill="#2d652a"/><g fill="#2f6a2c"><circle cx="4" cy="46" r="1.7"/><circle cx="84.7" cy="46" r="1.7"/><circle cx="4" cy="1" r="1.7"/><circle cx="84.7" cy="1" r="1.7"/></g></svg>
<svg class="ab" style="left:1995px;top:1492px;" width="42" height="34" viewBox="0 0 32 26"><g fill="none" stroke="#111" stroke-width="1.3" stroke-linejoin="round"><path d="M4.4,0.6 L27.8,0.6 L31.6,7.6 M4.4,0.6 L0.4,7.6"/><line x1="4.4" y1="7.3" x2="28.2" y2="7.3"/><path d="M0.4,7.6 Q0.6,10.9 3.8,10.9 Q7.2,10.9 8.2,7.8 Q9.4,10.9 12.2,10.9 Q15,10.9 16,7.8 Q17,10.9 19.8,10.9 Q22.6,10.9 23.8,7.8 Q24.8,10.9 27.8,10.9 Q31.4,10.9 31.6,7.6"/><path d="M2.4,10.6 L2.4,25.6 L30,25.6 L30,10.6"/></g><rect x="4.8" y="13.4" width="14" height="10" fill="none" stroke="#3f7fe6" stroke-width="1.5"/><rect x="21" y="13.4" width="6.4" height="12" fill="none" stroke="#223" stroke-width="1.4"/><line x1="21" y1="22.6" x2="27.4" y2="22.6" stroke="#223" stroke-width="1.2"/></svg>
<svg class="ab" style="left:2276px;top:1484px;" width="32" height="32" viewBox="0 0 32 32"><defs><linearGradient id="fg" x1="0" y1="0" x2="1" y2="1"><stop offset="0" stop-color="#f8efc0"/><stop offset="1" stop-color="#ebd058"/></linearGradient></defs><rect x="0.8" y="10.4" width="26" height="20.6" fill="#fdf6dc" stroke="#d9a84e" stroke-width="1.6"/><rect x="4" y="13" width="8" height="5.6" fill="#f3df90"/><rect x="10.6" y="0.8" width="20.6" height="20.5" fill="#eef3fb" stroke="#7fa2d8" stroke-width="1.6"/><line x1="14" y1="5.1" x2="27.5" y2="5.1" stroke="#9fcc98" stroke-width="1.8" stroke-linecap="round"/><g stroke="#b9cdea" stroke-width="1.5"><line x1="14" y1="9" x2="27.5" y2="9"/><line x1="14" y1="13" x2="27.5" y2="13"/><line x1="15.6" y1="9" x2="15.6" y2="17"/></g><path d="M0.8,18.6 L4,18.6 L11.8,18.6 L11.8,16.8 L27.8,16.8 L27.8,31 L0.8,31 Z" fill="#fbf1cc" stroke="#d9a24e" stroke-width="1.6"/><rect x="4" y="20.2" width="21" height="8.6" fill="url(#fg)"/><line x1="0.8" y1="30.8" x2="27.8" y2="30.8" stroke="#cf8638" stroke-width="1.6"/></svg>
<svg class="ab" style="left:2408px;top:1484px;" width="32" height="32" viewBox="0 0 32 32"><defs><linearGradient id="fg" x1="0" y1="0" x2="1" y2="1"><stop offset="0" stop-color="#f8efc0"/><stop offset="1" stop-color="#ebd058"/></linearGradient></defs><rect x="0.8" y="10.4" width="26" height="20.6" fill="#fdf6dc" stroke="#d9a84e" stroke-width="1.6"/><rect x="4" y="13" width="8" height="5.6" fill="#f3df90"/><rect x="10.6" y="0.8" width="20.6" height="20.5" fill="#eef3fb" stroke="#7fa2d8" stroke-width="1.6"/><line x1="14" y1="5.1" x2="27.5" y2="5.1" stroke="#9fcc98" stroke-width="1.8" stroke-linecap="round"/><g stroke="#b9cdea" stroke-width="1.5"><line x1="14" y1="9" x2="27.5" y2="9"/><line x1="14" y1="13" x2="27.5" y2="13"/><line x1="15.6" y1="9" x2="15.6" y2="17"/></g><path d="M0.8,18.6 L4,18.6 L11.8,18.6 L11.8,16.8 L27.8,16.8 L27.8,31 L0.8,31 Z" fill="#fbf1cc" stroke="#d9a24e" stroke-width="1.6"/><rect x="4" y="20.2" width="21" height="8.6" fill="url(#fg)"/><line x1="0.8" y1="30.8" x2="27.8" y2="30.8" stroke="#cf8638" stroke-width="1.6"/></svg>
<svg class="ab" style="left:38px;top:1584.3px;" width="24" height="24" viewBox="0 0 24 24"><rect width="24" height="24" rx="4" fill="#888"/><rect x="3.6" y="9.7" width="16.8" height="4.4" fill="#fff"/><rect x="9.75" y="3.9" width="4.4" height="16" fill="#fff"/></svg>
<svg class="ab" style="left:95.8px;top:1583.9px;" width="28" height="28" viewBox="0 0 28 28"><rect x="1.5" y="1.5" width="25" height="25" rx="5" fill="none" stroke="#8a8a8a" stroke-width="3"/></svg>
<svg class="ab" style="left:1179.5px;top:1574px;" width="89" height="50" viewBox="0 0 89 50"><rect x="0" y="0" width="89" height="50" fill="#5e9f53"/><rect x="7" y="3.8" width="75" height="42" fill="#69ae5e"/><rect x="12.2" y="8" width="3.2" height="33.6" rx="1.6" fill="#579a4c"/><rect x="19.9" y="8" width="3.2" height="33.6" rx="1.6" fill="#579a4c"/><rect x="27.6" y="8" width="3.2" height="33.6" rx="1.6" fill="#579a4c"/><rect x="35.3" y="8" width="3.2" height="33.6" rx="1.6" fill="#579a4c"/><rect x="43.0" y="8" width="3.2" height="33.6" rx="1.6" fill="#579a4c"/><rect x="50.7" y="8" width="3.2" height="33.6" rx="1.6" fill="#579a4c"/><rect x="58.4" y="8" width="3.2" height="33.6" rx="1.6" fill="#579a4c"/><rect x="66.1" y="8" width="3.2" height="33.6" rx="1.6" fill="#579a4c"/><rect x="73.8" y="8" width="3.2" height="33.6" rx="1.6" fill="#579a4c"/><rect x="19" y="14" width="47" height="22.5" rx="1" fill="#fdfcfa"/><text x="42.5" y="30.2" font-family="Liberation Sans" font-weight="bold" font-size="14" text-anchor="middle" fill="#000" textLength="34" lengthAdjust="spacingAndGlyphs">20FT</text><rect x="23.4" y="46.2" width="9" height="3.8" fill="#2d652a"/><rect x="56" y="46.2" width="9" height="3.8" fill="#2d652a"/><g fill="#2f6a2c"><circle cx="4" cy="46" r="1.7"/><circle cx="84.7" cy="46" r="1.7"/><circle cx="4" cy="1" r="1.7"/><circle cx="84.7" cy="1" r="1.7"/></g></svg>
<svg class="ab" style="left:1995px;top:1584px;" width="42" height="34" viewBox="0 0 32 26"><g fill="none" stroke="#111" stroke-width="1.3" stroke-linejoin="round"><path d="M4.4,0.6 L27.8,0.6 L31.6,7.6 M4.4,0.6 L0.4,7.6"/><line x1="4.4" y1="7.3" x2="28.2" y2="7.3"/><path d="M0.4,7.6 Q0.6,10.9 3.8,10.9 Q7.2,10.9 8.2,7.8 Q9.4,10.9 12.2,10.9 Q15,10.9 16,7.8 Q17,10.9 19.8,10.9 Q22.6,10.9 23.8,7.8 Q24.8,10.9 27.8,10.9 Q31.4,10.9 31.6,7.6"/><path d="M2.4,10.6 L2.4,25.6 L30,25.6 L30,10.6"/></g><rect x="4.8" y="13.4" width="14" height="10" fill="none" stroke="#3f7fe6" stroke-width="1.5"/><rect x="21" y="13.4" width="6.4" height="12" fill="none" stroke="#223" stroke-width="1.4"/><line x1="21" y1="22.6" x2="27.4" y2="22.6" stroke="#223" stroke-width="1.2"/></svg>
<svg class="ab" style="left:2276px;top:1576px;" width="32" height="32" viewBox="0 0 32 32"><defs><linearGradient id="fg" x1="0" y1="0" x2="1" y2="1"><stop offset="0" stop-color="#f8efc0"/><stop offset="1" stop-color="#ebd058"/></linearGradient></defs><rect x="0.8" y="10.4" width="26" height="20.6" fill="#fdf6dc" stroke="#d9a84e" stroke-width="1.6"/><rect x="4" y="13" width="8" height="5.6" fill="#f3df90"/><rect x="10.6" y="0.8" width="20.6" height="20.5" fill="#eef3fb" stroke="#7fa2d8" stroke-width="1.6"/><line x1="14" y1="5.1" x2="27.5" y2="5.1" stroke="#9fcc98" stroke-width="1.8" stroke-linecap="round"/><g stroke="#b9cdea" stroke-width="1.5"><line x1="14" y1="9" x2="27.5" y2="9"/><line x1="14" y1="13" x2="27.5" y2="13"/><line x1="15.6" y1="9" x2="15.6" y2="17"/></g><path d="M0.8,18.6 L4,18.6 L11.8,18.6 L11.8,16.8 L27.8,16.8 L27.8,31 L0.8,31 Z" fill="#fbf1cc" stroke="#d9a24e" stroke-width="1.6"/><rect x="4" y="20.2" width="21" height="8.6" fill="url(#fg)"/><line x1="0.8" y1="30.8" x2="27.8" y2="30.8" stroke="#cf8638" stroke-width="1.6"/></svg>
<svg class="ab" style="left:2408px;top:1576px;" width="32" height="32" viewBox="0 0 32 32"><defs><linearGradient id="fg" x1="0" y1="0" x2="1" y2="1"><stop offset="0" stop-color="#f8efc0"/><stop offset="1" stop-color="#ebd058"/></linearGradient></defs><rect x="0.8" y="10.4" width="26" height="20.6" fill="#fdf6dc" stroke="#d9a84e" stroke-width="1.6"/><rect x="4" y="13" width="8" height="5.6" fill="#f3df90"/><rect x="10.6" y="0.8" width="20.6" height="20.5" fill="#eef3fb" stroke="#7fa2d8" stroke-width="1.6"/><line x1="14" y1="5.1" x2="27.5" y2="5.1" stroke="#9fcc98" stroke-width="1.8" stroke-linecap="round"/><g stroke="#b9cdea" stroke-width="1.5"><line x1="14" y1="9" x2="27.5" y2="9"/><line x1="14" y1="13" x2="27.5" y2="13"/><line x1="15.6" y1="9" x2="15.6" y2="17"/></g><path d="M0.8,18.6 L4,18.6 L11.8,18.6 L11.8,16.8 L27.8,16.8 L27.8,31 L0.8,31 Z" fill="#fbf1cc" stroke="#d9a24e" stroke-width="1.6"/><rect x="4" y="20.2" width="21" height="8.6" fill="url(#fg)"/><line x1="0.8" y1="30.8" x2="27.8" y2="30.8" stroke="#cf8638" stroke-width="1.6"/></svg>
<div class="ab" style="left:2828px;top:460px;width:22px;height:1206px;background:#e5e5e5;border-radius:0 0 11px 11px"></div>
<div class="ab" style="left:2828px;top:460px;width:22px;height:631px;background:#ababab;border-radius:11px"></div>
<div class="ab" style="left:18px;top:1666px;width:2810px;height:22px;background:#e5e5e5;border-radius:11px"></div>
<div class="ab" style="left:18px;top:1666px;width:2746px;height:22px;background:#ababab;border-radius:11px"></div>
<div class="ab" style="left:18px;top:1688px;width:2832px;height:2px;background:#ccc"></div>
<svg class="ab" style="left:54px;top:1724px;" width="24" height="24" viewBox="0 0 24 24"><polyline points="12,2 3,12 12,22" fill="none" stroke="#c4c4c4" stroke-width="3.2" stroke-linecap="round" stroke-linejoin="round"/><polyline points="22,2 13,12 22,22" fill="none" stroke="#c4c4c4" stroke-width="3.2" stroke-linecap="round" stroke-linejoin="round"/></svg>
<svg class="ab" style="left:138px;top:1724px;" width="16" height="24" viewBox="0 0 16 24"><polyline points="12,2 3,12 12,22" fill="none" stroke="#c4c4c4" stroke-width="3.2" stroke-linecap="round" stroke-linejoin="round"/></svg>
<svg class="ab" style="left:580px;top:1724px;" width="16" height="24" viewBox="0 0 16 24"><polyline points="3,2 12,12 3,22" fill="none" stroke="#8c8c8c" stroke-width="3.2" stroke-linecap="round" stroke-linejoin="round"/></svg>
<svg class="ab" style="left:656px;top:1724px;" width="24" height="24" viewBox="0 0 24 24"><polyline points="3,2 12,12 3,22" fill="none" stroke="#8c8c8c" stroke-width="3.2" stroke-linecap="round" stroke-linejoin="round"/><polyline points="13,2 22,12 13,22" fill="none" stroke="#8c8c8c" stroke-width="3.2" stroke-linecap="round" stroke-linejoin="round"/></svg>
<div class="t" style="left:220px;top:1721px;color:#555">Trang</div>
<div class="ab" style="left:316px;top:1704px;width:100px;height:63px;border:2px solid #ccc"></div>
<div class="t" style="left:339px;top:1723px;color:#555">1</div>
<div class="t" style="left:428px;top:1721px;color:#555">trong 2</div>
<div class="t" style="left:2423px;width:400px;text-align:right;top:1721px;color:#555;letter-spacing:.17px">Hiển thị 1 - 25 trong 33</div>
<div class="ab" style="left:194px;top:1722px;width:2px;height:28px;background:#ccc"></div>
<div class="ab" style="left:538px;top:1722px;width:2px;height:28px;background:#ccc"></div>
<div class="ab" style="left:716px;top:1722px;width:2px;height:28px;background:#ccc"></div>
</div>
<div style="position:absolute;left:2867px;top:1339px;width:20px;height:297px;background:#3b82c6;border:2px solid #000;border-radius:10px 0 0 10px"></div>
<div style="position:absolute;left:2876px;top:1478px;width:6px;height:3px;background:#ddd"></div><div style="position:absolute;left:2876px;top:1486px;width:6px;height:3px;background:#ddd"></div><div style="position:absolute;left:2876px;top:1494px;width:6px;height:3px;background:#ddd"></div>
</body></html>
